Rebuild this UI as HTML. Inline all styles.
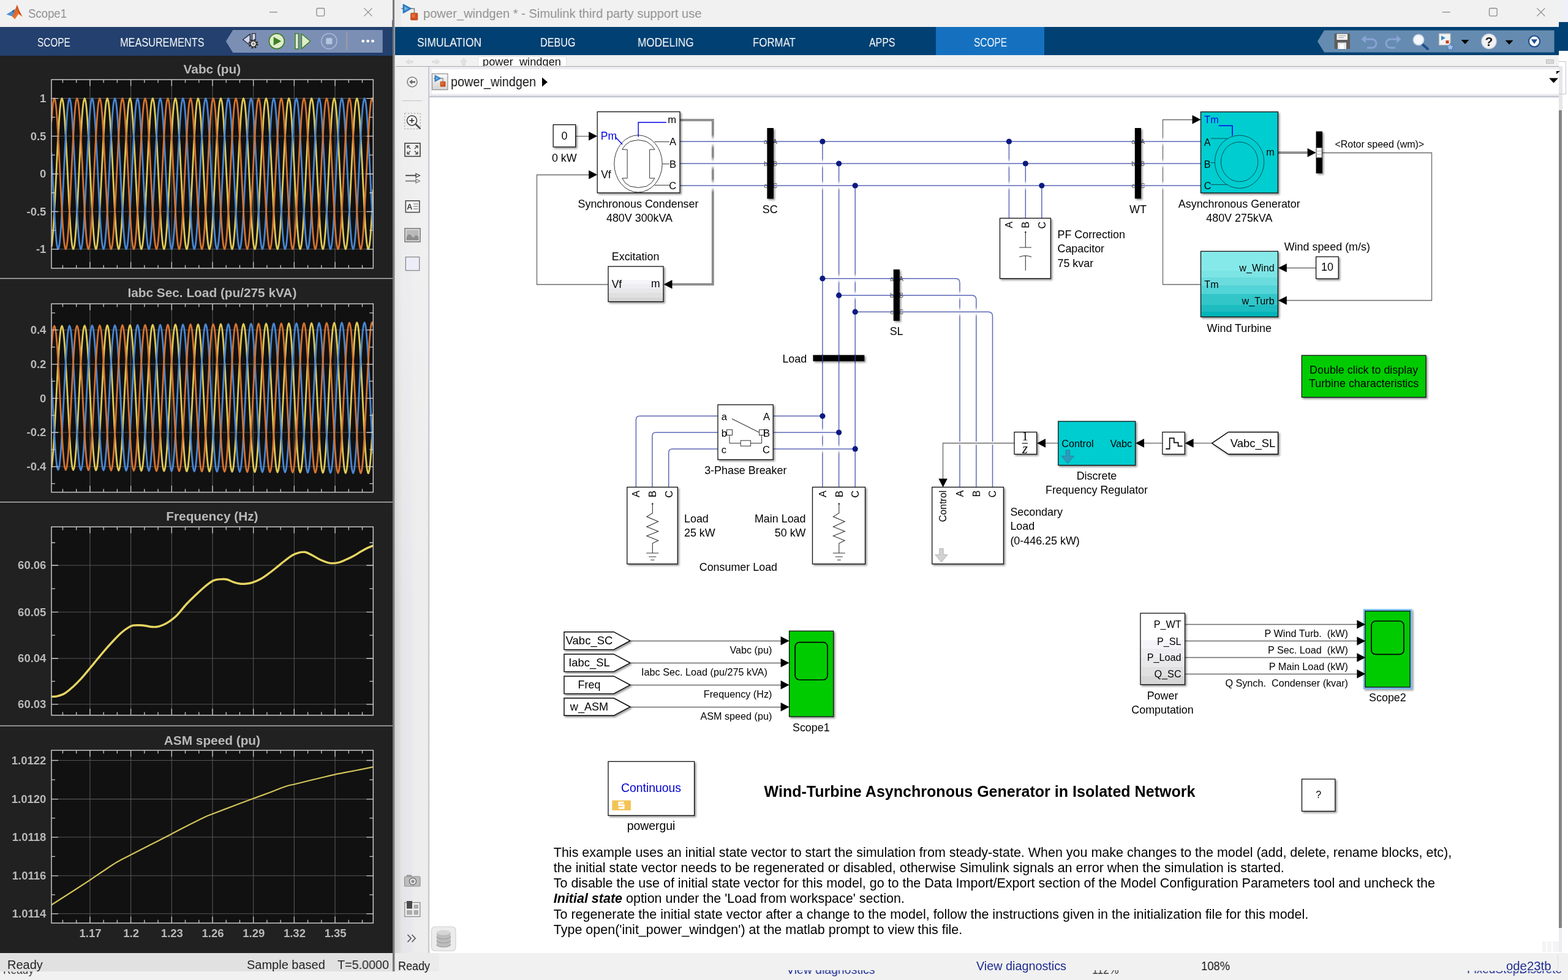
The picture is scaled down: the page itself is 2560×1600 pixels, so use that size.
<!DOCTYPE html>
<html lang="en"><head><meta charset="utf-8"><title>power_windgen - Simulink / Scope1</title>
<style>
html,body{margin:0;padding:0;background:#f1f1f1}
body{width:2560px;height:1600px;overflow:hidden;position:relative;font-family:"Liberation Sans",sans-serif}
.abs{position:absolute;display:block}
svg.abs{will-change:transform}
.t{position:absolute;white-space:nowrap;line-height:1;transform-origin:0 50%;will-change:transform}
</style></head>
<body>
<div class="abs" style="left:0;top:0;width:640.5px;height:44px;background:#f1f1f1"></div>
<div class="abs" style="left:0;top:44px;width:640.5px;height:47px;background:#23406e"></div>
<div class="abs" style="left:0;top:91px;width:640.5px;height:1465px;background:#212121"></div>
<div class="abs" style="left:0;top:1556px;width:640.5px;height:30px;background:#e1e1e1"></div>
<div class="abs" style="left:0;top:1586px;width:645px;height:14px;background:#f1f1f1"></div>
<svg class="abs" style="left:0;top:0" width="641" height="91" viewBox="0 0 641 91"><defs><linearGradient id="mlg" x1="0" y1="0" x2="1" y2="1"><stop offset="0" stop-color="#b83a14"/><stop offset=".55" stop-color="#e8702a"/><stop offset="1" stop-color="#f6b040"/></linearGradient></defs><path d="M10.3 23.6 L18.8 18.6 L22.6 21.4 L19.6 26.6 Z" fill="#4a8fd6"/><path d="M18.8 18.6 L24.5 14.5 L22.6 21.4 Z" fill="#2b5f9e"/><path d="M22.6 21.4 L27.8 7.8 L31.2 17 L36.4 27.3 L30.2 23 L24.3 31.6 L19.6 26.6 Z" fill="url(#mlg)"/><path d="M27.8 7.8 L31.2 17 L36.4 27.3 L30.4 21.5 Z" fill="#c9461a"/><line x1="440" y1="19.8" x2="453" y2="19.8" stroke="#8a8a8a" stroke-width="1.3"/><rect x="517" y="13.5" width="12.6" height="12.6" rx="1.8" fill="none" stroke="#8a8a8a" stroke-width="1.3"/><path d="M594.5 13.4 l13 13 M607.5 13.4 l-13 13" stroke="#8a8a8a" stroke-width="1.3" fill="none"/><path d="M368.8 67.5 L380.3 49 H624.7 V86 H380.3 Z" fill="#7b8fb5"/><path d="M396.6 64.8 L408.3 55.6 V74 Z" fill="#cfd8f2" stroke="#2b2b2b" stroke-width="1.4" stroke-linejoin="round"/><rect x="411.6" y="54.8" width="5.6" height="11" fill="#cfd8f2" stroke="#2b2b2b" stroke-width="1.3"/><circle cx="413.6" cy="71.6" r="6.2" fill="#e9e9e9" stroke="#2b2b2b" stroke-width="3.4" stroke-dasharray="2.6 2.27"/><circle cx="413.6" cy="71.6" r="5" fill="#e4e4e4" stroke="#2b2b2b" stroke-width="1.6"/><circle cx="413.6" cy="71.6" r="2" fill="#8a8a8a"/><circle cx="451.8" cy="67.2" r="12.4" fill="#e0edcc" stroke="#3c8024" stroke-width="1.8"/><path d="M446.6 60.2 L459.2 67.2 L446.6 74.2 Z" fill="#3c8024"/><rect x="482" y="54.8" width="5.4" height="25" fill="#e0edcc" stroke="#3c8024" stroke-width="1.5"/><path d="M492.4 55.2 L506.6 67.3 L492.4 79.6 Z" fill="#e0edcc" stroke="#3c8024" stroke-width="1.5" stroke-linejoin="round"/><circle cx="537.3" cy="67.2" r="12.6" fill="none" stroke="#b9bfe0" stroke-width="1.3"/><rect x="532.2" y="62.1" width="10.2" height="10.2" rx="1.6" fill="#b3c4de"/><line x1="566.4" y1="53" x2="566.4" y2="82" stroke="#ada595" stroke-width="1.3"/><circle cx="592.7" cy="67.1" r="2.4" fill="#fff"/><circle cx="600.6" cy="67.1" r="2.4" fill="#fff"/><circle cx="608.5" cy="67.1" r="2.4" fill="#fff"/></svg>
<span class="t" style="left:45.5px;top:11px;font-size:21px;color:#8e8e8e;transform:scaleX(0.8845);">Scope1</span>
<span class="t" style="left:60.9px;top:60px;font-size:19.6px;color:#fff;transform:scaleX(0.7840);">SCOPE</span>
<span class="t" style="left:195.8px;top:60px;font-size:19.6px;color:#fff;transform:scaleX(0.8306);">MEASUREMENTS</span>
<span class="t" style="left:11.6px;top:1565px;font-size:20px;color:#222;">Ready</span>
<span class="t" style="left:403px;top:1565px;font-size:20px;color:#222;">Sample based</span>
<span class="t" style="left:551.4px;top:1565px;font-size:20px;color:#222;transform:scaleX(0.9874);">T=5.0000</span>
<div class="abs" style="left:0;top:1586px;width:200px;height:12px;overflow:hidden"><span class="t" style="left:5px;top:-12px;font-size:19px;color:#333;transform:scaleX(0.9104);">Ready</span></div>
<div class="abs" style="left:640.4px;top:33px;width:4.6px;height:11px;background:#5a6aa0"></div>
<div class="abs" style="left:640.5px;top:0;width:3px;height:1586px;background:#787878"></div>
<div class="abs" style="left:643.5px;top:0;width:1.5px;height:1586px;background:#bdbdbd"></div>
<div class="abs" style="left:643.5px;top:0;width:1.5px;height:44px;background:#e6e6e6"></div>
<div class="abs" style="left:645px;top:0;width:1915px;height:44px;background:#f1f1f1"></div>
<div class="abs" style="left:645px;top:0;width:10px;height:44px;background:#ebebeb"></div>
<div class="abs" style="left:645px;top:44px;width:1900px;height:46.6px;background:#004073"></div>
<div class="abs" style="left:2545px;top:36px;width:15px;height:47px;background:#004073"></div>
<div class="abs" style="left:2550px;top:0;width:10px;height:36px;background:#eff0f8"></div>
<div class="abs" style="left:1528px;top:44px;width:177px;height:46.6px;background:#1571c0"></div>
<div class="abs" style="left:645px;top:90px;width:1900px;height:18px;background:#f1f1f1"></div>
<div class="abs" style="left:780.5px;top:92.5px;width:143.5px;height:15.5px;background:#fff;box-shadow:0 0 0 1px #e0e0e0"></div>
<div class="abs" style="left:781px;top:92px;width:143px;height:15.5px;overflow:hidden"><span class="t" style="left:7.2px;top:0px;font-size:18px;color:#111;transform:scaleX(1.0151);">power_windgen</span></div>
<div class="abs" style="left:646px;top:108px;width:1899px;height:1px;background:#a9a9a9"></div>
<div class="abs" style="left:646px;top:109px;width:1899px;height:4px;background:#ececf2"></div>
<div class="abs" style="left:645px;top:109px;width:56px;height:1447px;background:linear-gradient(90deg,#d2d2d2 0,#e0e0e0 9px,#e5e5e8 12px,#e7e7ee 26px,#ececec 30px,#ededed 52px,#e4e4ea 56px)"></div>
<div class="abs" style="left:645px;top:109px;width:54px;height:900px;background:linear-gradient(180deg,rgba(241,241,241,.9),rgba(241,241,241,.55) 45%,rgba(241,241,241,0))"></div>
<div class="abs" style="left:699px;top:109px;width:2px;height:1447px;background:#c9c9d2"></div>
<div class="abs" style="left:701px;top:109px;width:1844px;height:50px;background:#eeeef2"></div>
<div class="abs" style="left:705px;top:113px;width:1840px;height:40px;background:#fff"></div>
<div class="abs" style="left:701px;top:156px;width:1844px;height:3px;background:linear-gradient(#d9dbe2,#b7bcc8)"></div>
<div class="abs" style="left:702px;top:159px;width:1843px;height:1397px;background:#fff"></div>
<div class="abs" style="left:2545px;top:83px;width:15px;height:1473px;background:#fff"></div>
<div class="abs" style="left:2545px;top:108px;width:6px;height:72px;background:#e6e6ea"></div>
<div class="abs" style="left:2545px;top:180px;width:5px;height:1335px;background:#858585"></div>
<div class="abs" style="left:2545px;top:100px;width:12px;height:54px;border:1px solid #c4c8d0;border-left:0;box-sizing:border-box"></div>
<div class="abs" style="left:645px;top:1556px;width:1915px;height:44px;background:#f1f1f1"></div>
<div class="abs" style="left:645px;top:1556px;width:72px;height:30px;background:#ebebeb"></div>
<div class="abs" style="left:2518px;top:1537px;width:27px;height:17px;background:linear-gradient(90deg,#f4f4f4 0 6.5px,#fff 6.5px 8px,#f4f4f4 8px 15.5px,#fff 15.5px 17px,#f4f4f4 17px)"></div>
<svg class="abs" style="left:645px;top:0" width="1915" height="160" viewBox="645 0 1915 160"><g transform="translate(656 8) scale(1)"><path d="M-0.8 6.1 H3 M15 6.1 H20.4 V14" fill="none" stroke="#7a7a7a" stroke-width="1.5"/><path d="M2 -1.4 L16 6.1 L2 13.8 Z" fill="#2f7dc4" stroke="#2a6fb4" stroke-width=".8" stroke-linejoin="round"/><path d="M4.4 2.6 L10.6 6.1 L4.4 9.6 Z" fill="#6fb6e8"/><rect x="14.6" y="13.4" width="11.2" height="11.3" rx="1" fill="#d24f1c" stroke="#b4400f" stroke-width="0.8"/><rect x="16" y="14.8" width="6" height="6" fill="#e47a40" opacity=".75"/></g><line x1="2354.8" y1="19.8" x2="2367.8" y2="19.8" stroke="#8a8a8a" stroke-width="1.3"/><rect x="2431.5" y="13.5" width="12.6" height="12.6" rx="1.8" fill="none" stroke="#8a8a8a" stroke-width="1.3"/><path d="M2509.3 13.4 l13 13 M2522.3 13.4 l-13 13" stroke="#8a8a8a" stroke-width="1.3" fill="none"/><path d="M2151 67.5 L2162 49.5 H2537.6 V85.5 H2162 Z" fill="#668bb0"/><rect x="2178.5" y="54.5" width="25.5" height="25.5" rx="1.5" fill="#5f5f5f"/><rect x="2182.5" y="55.5" width="17.5" height="9.5" fill="#f4f4f4"/><path d="M2185 58.5 h12 M2185 61.5 h9" stroke="#999" stroke-width="1.2"/><rect x="2184" y="69.5" width="14" height="10.5" fill="#e6e6e6"/><rect x="2187" y="72" width="7" height="8" fill="#fdfdfd"/><path d="M2224 64 h16 a7 7 0 0 1 0 14 h-8" fill="none" stroke="#88a3d6" stroke-width="3"/><path d="M2230 57.5 L2222.5 64 L2230 70.5 Z" fill="#88a3d6"/><path d="M2286 64 h-16 a7 7 0 0 0 0 14 h8" fill="none" stroke="#88a3d6" stroke-width="3"/><path d="M2280 57.5 L2287.5 64 L2280 70.5 Z" fill="#88a3d6"/><path d="M2322 72 L2331 80" stroke="#1f4e8c" stroke-width="4" stroke-linecap="round"/><circle cx="2316" cy="65" r="8.6" fill="#f5f8fc" stroke="#c9d3e3" stroke-width="1.6"/><rect x="2349.5" y="55" width="18.5" height="18.5" fill="#f3f3f3" stroke="#bdbdbd" stroke-width="1.2"/><path d="M2353 58 L2360 62 L2353 66 Z" fill="#3d8bc9"/><rect x="2360.5" y="66" width="5" height="5" fill="#c8431a"/><path d="M2367.8 70.5 l1.9 4 4.3 .6 -3.1 3 .8 4.3 -3.9 -2.1 -3.9 2.1 .8 -4.3 -3.1 -3 4.3 -.6 Z" fill="#9cc3ef" stroke="#4775b5" stroke-width="1"/><path d="M2385.5 65 h13 l-6.5 7 Z" fill="#000"/><circle cx="2431" cy="67.5" r="12" fill="#f1f1f1" stroke="#ccd3df" stroke-width="1.4"/><text x="2431" y="75" text-anchor="middle" font-size="21" font-weight="bold" fill="#1c1c1c">?</text><path d="M2457.5 65.8 h13 l-6.5 7 Z" fill="#000"/><circle cx="2505" cy="67.5" r="9" fill="#fff" stroke="#1d4f91" stroke-width="2.2"/><path d="M2499.8 64.2 h10.4 l-5.2 7.6 Z" fill="#1d4f91"/><path d="M662 101 l6 -4 v2.5 h6 v3 h-6 v2.5 Z" fill="#e2e2e2" stroke="#d4d4d4" stroke-width=".8"/><path d="M718 101 l-6 -4 v2.5 h-6 v3 h6 v2.5 Z" fill="#e2e2e2" stroke="#d4d4d4" stroke-width=".8"/><path d="M757 95 l5 6 h-2.8 v5.5 h-4.4 v-5.5 h-2.8 Z" fill="#e2e2e2" stroke="#d4d4d4" stroke-width=".8"/><rect x="2524.5" y="97.5" width="12" height="6" fill="#d8d8d8" stroke="#b5b5b5" stroke-width=".8"/><defs><linearGradient id="bcg" x1="0" y1="0" x2="0" y2="1"><stop offset="0" stop-color="#fafafa"/><stop offset="1" stop-color="#d4d4d4"/></linearGradient></defs><rect x="705.5" y="120.5" width="25.5" height="26" fill="url(#bcg)" stroke="#8e8e8e" stroke-width="1.2"/><g transform="translate(708.5 123.5) scale(0.72)"><path d="M-0.8 6.1 H3 M15 6.1 H20.4 V14" fill="none" stroke="#7a7a7a" stroke-width="1.5"/><path d="M2 -1.4 L16 6.1 L2 13.8 Z" fill="#2f7dc4" stroke="#2a6fb4" stroke-width=".8" stroke-linejoin="round"/><path d="M4.4 2.6 L10.6 6.1 L4.4 9.6 Z" fill="#6fb6e8"/><rect x="14.6" y="13.4" width="11.2" height="11.3" rx="1" fill="#d24f1c" stroke="#b4400f" stroke-width="0.8"/><rect x="16" y="14.8" width="6" height="6" fill="#e47a40" opacity=".75"/></g><path d="M885 126.5 L894 134 L885 141.5 Z" fill="#000"/><path d="M2529 127.5 h15 l-7.5 8 Z" fill="#000"/><path d="M2541 116 h6 l-6 5 Z" fill="#111"/></svg>
<span class="t" style="left:691px;top:11px;font-size:21px;color:#8e8e8e;transform:scaleX(0.9590);">power_windgen * - Simulink third party support use</span>
<span class="t" style="left:680.5px;top:60px;font-size:19.6px;color:#fff;transform:scaleX(0.8873);">SIMULATION</span>
<span class="t" style="left:881.5px;top:60px;font-size:19.6px;color:#fff;transform:scaleX(0.8249);">DEBUG</span>
<span class="t" style="left:1040.8px;top:60px;font-size:19.6px;color:#fff;transform:scaleX(0.8781);">MODELING</span>
<span class="t" style="left:1228.6px;top:60px;font-size:19.6px;color:#fff;transform:scaleX(0.8599);">FORMAT</span>
<span class="t" style="left:1418.6px;top:60px;font-size:19.6px;color:#fff;transform:scaleX(0.8108);">APPS</span>
<span class="t" style="left:1589.5px;top:60px;font-size:19.6px;color:#fff;transform:scaleX(0.7869);">SCOPE</span>
<span class="t" style="left:735.5px;top:124px;font-size:21.5px;color:#111;transform:scaleX(0.9229);">power_windgen</span>
<span class="t" style="left:649.6px;top:1568px;font-size:19.6px;color:#111;transform:scaleX(0.9178);">Ready</span>
<span class="t" style="left:1594px;top:1568px;font-size:19.6px;color:#1d2b8f;transform:scaleX(1.0094);">View diagnostics</span>
<span class="t" style="left:1961px;top:1568px;font-size:19.6px;color:#111;transform:scaleX(0.9376);">108%</span>
<span class="t" style="left:2459px;top:1568px;font-size:19.6px;color:#1d2b8f;transform:scaleX(1.0374);">ode23tb</span>
<div class="abs" style="left:1270px;top:1584px;width:180px;height:12px;overflow:hidden"><span class="t" style="left:13.5px;top:-10px;font-size:19.6px;color:#1f2f96;transform:scaleX(0.9922);">View diagnostics</span></div>
<div class="abs" style="left:1770px;top:1584px;width:80px;height:12px;overflow:hidden"><span class="t" style="left:13px;top:-10px;font-size:19.6px;color:#333;transform:scaleX(0.8937);">112%</span></div>
<div class="abs" style="left:2390px;top:1585px;width:170px;height:12px;overflow:hidden"><span class="t" style="left:5px;top:-12px;font-size:19.6px;color:#1f2f96;transform:scaleX(0.9679);">FixedStepDiscrete</span></div>
<div class="abs" style="left:2545px;top:1515px;width:5px;height:40px;background:#ededf1"></div>
<div class="abs" style="left:2542.5px;top:1558px;width:1px;height:28px;background:#dcdce6"></div>
<svg class="abs" style="left:645px;top:109px" width="110" height="1447" viewBox="645 109 110 1447"><circle cx="673" cy="133.8" r="8" fill="#f6f6f6" stroke="#8a8a8a" stroke-width="1.8"/><path d="M668 133.8 l5 -4 v2.6 h5 v2.8 h-5 v2.6 Z" fill="#6a6a6a"/><line x1="656.5" y1="164.5" x2="689" y2="164.5" stroke="#c2c2c2" stroke-width="1"/><rect x="660.8" y="185" width="25.5" height="25.5" fill="none" stroke="#9a9a9a" stroke-width="1" stroke-dasharray="2.5 2.5"/><path d="M679 203 L685.5 209.5" stroke="#4a4a4a" stroke-width="2.6" stroke-linecap="round"/><circle cx="672.5" cy="196.8" r="8" fill="#fdfdfd" stroke="#4a4a4a" stroke-width="1.7"/><path d="M668.5 196.8 h8 M672.5 192.8 v8" stroke="#222" stroke-width="1.6"/><rect x="661" y="233.8" width="25" height="21.5" fill="#f2f2f2" stroke="#4a4a4a" stroke-width="1.7"/><path d="M665 238 l5 5 M665 238 h4 M665 238 v4 M682 238 l-5 5 M682 238 h-4 M682 238 v4 M665 251.5 l5 -5 M665 251.5 h4 M665 251.5 v-4 M682 251.5 l-5 -5 M682 251.5 h-4 M682 251.5 v-4" stroke="#4a4a4a" stroke-width="1.5" fill="none"/><path d="M662 286.5 h18" stroke="#3a3a3a" stroke-width="1.8"/><path d="M679 283.2 L685.5 286.5 L679 289.8 Z" fill="none" stroke="#3a3a3a" stroke-width="1.2"/><path d="M662 295.5 h18" stroke="#777" stroke-width="1.8"/><path d="M679 292.2 L685.5 295.5 L679 298.8 Z" fill="none" stroke="#777" stroke-width="1.2"/><rect x="662.3" y="327.8" width="22.5" height="18.8" fill="#f4f4f4" stroke="#4a4a4a" stroke-width="1.6"/><text x="664.2" y="342" font-size="12.5" font-weight="bold" fill="#3a3a3a">A</text><path d="M675 333 h7.5 M675 337 h7.5 M675 341 h7.5" stroke="#6a6a6a" stroke-width="1.2"/><rect x="661" y="373" width="25" height="21.8" fill="#dedede" stroke="#7a7a7a" stroke-width="1.6"/><rect x="663.5" y="375.5" width="20" height="16.8" fill="#b9b9b9"/><path d="M663.5 388 q4 -9 8 -3 t6 0 q2 -3 6 2 v5.3 h-20 Z" fill="#8d8d8d"/><rect x="662.3" y="419.6" width="22.4" height="22" fill="#ecedf8" stroke="#8a8a8a" stroke-width="1.3"/><rect x="660.5" y="1431" width="25.5" height="16" rx="2" fill="#bdbdbd" stroke="#8f8f8f" stroke-width="1.2"/><rect x="664" y="1428.3" width="8" height="3.5" fill="#9a9a9a"/><circle cx="674" cy="1439" r="5.6" fill="#e8e8e8" stroke="#7a7a7a" stroke-width="1.6"/><circle cx="674" cy="1439" r="2.6" fill="#8c8c8c"/><rect x="660.8" y="1473.5" width="25" height="23" fill="#efefef" stroke="#8a8a8a" stroke-width="1.3"/><rect x="664" y="1471" width="9" height="12.5" fill="#4a4a4a"/><rect x="664" y="1486" width="9" height="7.5" fill="#ababab"/><rect x="675.5" y="1477" width="7.5" height="6.5" fill="#ababab"/><rect x="675.5" y="1486" width="7.5" height="7.5" fill="#ababab"/><path d="M665.5 1526 l5.5 6 -5.5 6 M672.5 1526 l5.5 6 -5.5 6" fill="none" stroke="#5a5a5a" stroke-width="1.8"/><rect x="704.5" y="1513" width="39.5" height="39.5" rx="6" fill="#ececec" stroke="#d0d0d0" stroke-width="1.2"/><path d="M713 1522.5 v20 a11.3 4 0 0 0 22.6 0 v-20" fill="#bdbdbd"/><ellipse cx="724.3" cy="1522.5" rx="11.3" ry="4" fill="#d6d6d6"/><path d="M713 1529 a11.3 4 0 0 0 22.6 0 M713 1535.5 a11.3 4 0 0 0 22.6 0 M713 1542 a11.3 4 0 0 0 22.6 0" fill="none" stroke="#a1a1a1" stroke-width="1.2"/></svg>
<svg class="abs" style="left:0;top:91px" width="641" height="1465" viewBox="0 91 641 1465" font-family="'Liberation Sans',sans-serif"><defs><clipPath id="cp0"><rect x="84" y="130" width="525.3" height="308"/></clipPath><clipPath id="cp1"><rect x="84" y="496" width="525.3" height="307.6"/></clipPath><clipPath id="cp2"><rect x="84" y="860.2" width="525.3" height="307.5"/></clipPath><clipPath id="cp3"><rect x="84" y="1225" width="525.3" height="282"/></clipPath></defs><rect x="0" y="453.9" width="641" height="1.4" fill="#bdbdbd"/><rect x="0" y="819" width="641" height="1.4" fill="#bdbdbd"/><rect x="0" y="1184.3" width="641" height="1.4" fill="#bdbdbd"/><text x="346.4" y="120" font-size="20.8" text-anchor="middle" font-weight="bold" fill="#b9b9b9">Vabc (pu)</text><text x="346.4" y="485" font-size="20.8" text-anchor="middle" font-weight="bold" fill="#b9b9b9">Iabc Sec. Load (pu/275 kVA)</text><text x="346.4" y="850.3" font-size="20.8" text-anchor="middle" font-weight="bold" fill="#b9b9b9">Frequency (Hz)</text><text x="346.4" y="1215.5" font-size="20.8" text-anchor="middle" font-weight="bold" fill="#b9b9b9">ASM speed (pu)</text><rect x="84" y="130" width="525.3" height="308" fill="#111"/><path d="M146.9 130V438M213.59 130V438M280.28 130V438M346.97 130V438M413.66 130V438M480.35 130V438M547.04 130V438M84 160.6H609.3M84 222.3H609.3M84 284H609.3M84 345.5H609.3M84 406.8H609.3" stroke="#555555" stroke-width="1.1" fill="none"/><g clip-path="url(#cp0)" fill="none" stroke-width="2.8" stroke-linejoin="round"><path d="M84 403.32C84.15 402.35 84.36 402.94 84.89 397.52C85.42 392.1 86.43 381.93 87.21 370.82C87.98 359.7 88.75 345.37 89.52 330.85C90.29 316.33 91.07 299.42 91.84 283.7C92.61 267.98 93.38 251.07 94.15 236.55C94.92 222.03 95.7 207.7 96.47 196.58C97.24 185.47 98.01 175.89 98.78 169.88C99.56 163.86 100.33 160.5 101.1 160.5C101.87 160.5 102.64 163.86 103.42 169.88C104.19 175.89 104.96 185.47 105.73 196.58C106.5 207.7 107.28 222.03 108.05 236.55C108.82 251.07 109.59 267.98 110.36 283.7C111.13 299.42 111.91 316.33 112.68 330.85C113.45 345.37 114.22 359.7 114.99 370.82C115.77 381.93 116.54 391.51 117.31 397.52C118.08 403.54 118.85 406.9 119.62 406.9C120.4 406.9 121.17 403.54 121.94 397.52C122.71 391.51 123.48 381.93 124.26 370.82C125.03 359.7 125.8 345.37 126.57 330.85C127.34 316.33 128.12 299.42 128.89 283.7C129.66 267.98 130.43 251.07 131.2 236.55C131.97 222.03 132.75 207.7 133.52 196.58C134.29 185.47 135.06 175.89 135.83 169.88C136.61 163.86 137.38 160.5 138.15 160.5C138.92 160.5 139.69 163.86 140.47 169.88C141.24 175.89 142.01 185.47 142.78 196.58C143.55 207.7 144.32 222.03 145.1 236.55C145.87 251.07 146.64 267.98 147.41 283.7C148.18 299.42 148.96 316.33 149.73 330.85C150.5 345.37 151.27 359.7 152.04 370.82C152.82 381.93 153.59 391.51 154.36 397.52C155.13 403.54 155.9 406.9 156.67 406.9C157.45 406.9 158.22 403.54 158.99 397.52C159.76 391.51 160.53 381.93 161.31 370.82C162.08 359.7 162.85 345.37 163.62 330.85C164.39 316.33 165.17 299.42 165.94 283.7C166.71 267.98 167.48 251.07 168.25 236.55C169.02 222.03 169.8 207.7 170.57 196.58C171.34 185.47 172.11 175.89 172.88 169.88C173.66 163.86 174.43 160.5 175.2 160.5C175.97 160.5 176.74 163.86 177.52 169.88C178.29 175.89 179.06 185.47 179.83 196.58C180.6 207.7 181.38 222.03 182.15 236.55C182.92 251.07 183.69 267.98 184.46 283.7C185.23 299.42 186.01 316.33 186.78 330.85C187.55 345.37 188.32 359.7 189.09 370.82C189.87 381.93 190.64 391.51 191.41 397.52C192.18 403.54 192.95 406.9 193.72 406.9C194.5 406.9 195.27 403.54 196.04 397.52C196.81 391.51 197.58 381.93 198.36 370.82C199.13 359.7 199.9 345.37 200.67 330.85C201.44 316.33 202.22 299.42 202.99 283.7C203.76 267.98 204.53 251.07 205.3 236.55C206.07 222.03 206.85 207.7 207.62 196.58C208.39 185.47 209.16 175.89 209.93 169.88C210.71 163.86 211.48 160.5 212.25 160.5C213.02 160.5 213.79 163.86 214.57 169.88C215.34 175.89 216.11 185.47 216.88 196.58C217.65 207.7 218.42 222.03 219.2 236.55C219.97 251.07 220.74 267.98 221.51 283.7C222.28 299.42 223.06 316.33 223.83 330.85C224.6 345.37 225.37 359.7 226.14 370.82C226.92 381.93 227.69 391.51 228.46 397.52C229.23 403.54 230 406.9 230.77 406.9C231.55 406.9 232.32 403.54 233.09 397.52C233.86 391.51 234.63 381.93 235.41 370.82C236.18 359.7 236.95 345.37 237.72 330.85C238.49 316.33 239.27 299.42 240.04 283.7C240.81 267.98 241.58 251.07 242.35 236.55C243.12 222.03 243.9 207.7 244.67 196.58C245.44 185.47 246.21 175.89 246.98 169.88C247.76 163.86 248.53 160.5 249.3 160.5C250.07 160.5 250.84 163.86 251.62 169.88C252.39 175.89 253.16 185.47 253.93 196.58C254.7 207.7 255.47 222.03 256.25 236.55C257.02 251.07 257.79 267.98 258.56 283.7C259.33 299.42 260.11 316.33 260.88 330.85C261.65 345.37 262.42 359.7 263.19 370.82C263.97 381.93 264.74 391.51 265.51 397.52C266.28 403.54 267.05 406.9 267.82 406.9C268.6 406.9 269.37 403.54 270.14 397.52C270.91 391.51 271.68 381.93 272.46 370.82C273.23 359.7 274 345.37 274.77 330.85C275.54 316.33 276.32 299.42 277.09 283.7C277.86 267.98 278.63 251.07 279.4 236.55C280.18 222.03 280.95 207.7 281.72 196.58C282.49 185.47 283.26 175.89 284.03 169.88C284.81 163.86 285.58 160.5 286.35 160.5C287.12 160.5 287.89 163.86 288.67 169.88C289.44 175.89 290.21 185.47 290.98 196.58C291.75 207.7 292.52 222.03 293.3 236.55C294.07 251.07 294.84 267.98 295.61 283.7C296.38 299.42 297.16 316.33 297.93 330.85C298.7 345.37 299.47 359.7 300.24 370.82C301.02 381.93 301.79 391.51 302.56 397.52C303.33 403.54 304.1 406.9 304.88 406.9C305.65 406.9 306.42 403.54 307.19 397.52C307.96 391.51 308.73 381.93 309.51 370.82C310.28 359.7 311.05 345.37 311.82 330.85C312.59 316.33 313.37 299.42 314.14 283.7C314.91 267.98 315.68 251.07 316.45 236.55C317.23 222.03 318 207.7 318.77 196.58C319.54 185.47 320.31 175.89 321.08 169.88C321.86 163.86 322.63 160.5 323.4 160.5C324.17 160.5 324.94 163.86 325.72 169.88C326.49 175.89 327.26 185.47 328.03 196.58C328.8 207.7 329.57 222.03 330.35 236.55C331.12 251.07 331.89 267.98 332.66 283.7C333.43 299.42 334.21 316.33 334.98 330.85C335.75 345.37 336.52 359.7 337.29 370.82C338.07 381.93 338.84 391.51 339.61 397.52C340.38 403.54 341.15 406.9 341.92 406.9C342.7 406.9 343.47 403.54 344.24 397.52C345.01 391.51 345.78 381.93 346.56 370.82C347.33 359.7 348.1 345.37 348.87 330.85C349.64 316.33 350.42 299.42 351.19 283.7C351.96 267.98 352.73 251.07 353.5 236.55C354.27 222.03 355.05 207.7 355.82 196.58C356.59 185.47 357.36 175.89 358.13 169.88C358.91 163.86 359.68 160.5 360.45 160.5C361.22 160.5 361.99 163.86 362.77 169.88C363.54 175.89 364.31 185.47 365.08 196.58C365.85 207.7 366.62 222.03 367.4 236.55C368.17 251.07 368.94 267.98 369.71 283.7C370.48 299.42 371.26 316.33 372.03 330.85C372.8 345.37 373.57 359.7 374.34 370.82C375.12 381.93 375.89 391.51 376.66 397.52C377.43 403.54 378.2 406.9 378.98 406.9C379.75 406.9 380.52 403.54 381.29 397.52C382.06 391.51 382.83 381.93 383.61 370.82C384.38 359.7 385.15 345.37 385.92 330.85C386.69 316.33 387.47 299.42 388.24 283.7C389.01 267.98 389.78 251.07 390.55 236.55C391.33 222.03 392.1 207.7 392.87 196.58C393.64 185.47 394.41 175.89 395.18 169.88C395.96 163.86 396.73 160.5 397.5 160.5C398.27 160.5 399.04 163.86 399.82 169.88C400.59 175.89 401.36 185.47 402.13 196.58C402.9 207.7 403.68 222.03 404.45 236.55C405.22 251.07 405.99 267.98 406.76 283.7C407.53 299.42 408.31 316.33 409.08 330.85C409.85 345.37 410.62 359.7 411.39 370.82C412.17 381.93 412.94 391.51 413.71 397.52C414.48 403.54 415.25 406.9 416.02 406.9C416.8 406.9 417.57 403.54 418.34 397.52C419.11 391.51 419.88 381.93 420.66 370.82C421.43 359.7 422.2 345.37 422.97 330.85C423.74 316.33 424.52 299.42 425.29 283.7C426.06 267.98 426.83 251.07 427.6 236.55C428.37 222.03 429.15 207.7 429.92 196.58C430.69 185.47 431.46 175.89 432.23 169.88C433.01 163.86 433.78 160.5 434.55 160.5C435.32 160.5 436.09 163.86 436.87 169.88C437.64 175.89 438.41 185.47 439.18 196.58C439.95 207.7 440.72 222.03 441.5 236.55C442.27 251.07 443.04 267.98 443.81 283.7C444.58 299.42 445.36 316.33 446.13 330.85C446.9 345.37 447.67 359.7 448.44 370.82C449.22 381.93 449.99 391.51 450.76 397.52C451.53 403.54 452.3 406.9 453.07 406.9C453.85 406.9 454.62 403.54 455.39 397.52C456.16 391.51 456.93 381.93 457.71 370.82C458.48 359.7 459.25 345.37 460.02 330.85C460.79 316.33 461.57 299.42 462.34 283.7C463.11 267.98 463.88 251.07 464.65 236.55C465.42 222.03 466.2 207.7 466.97 196.58C467.74 185.47 468.51 175.89 469.28 169.88C470.06 163.86 470.83 160.5 471.6 160.5C472.37 160.5 473.14 163.86 473.92 169.88C474.69 175.89 475.46 185.47 476.23 196.58C477 207.7 477.77 222.03 478.55 236.55C479.32 251.07 480.09 267.98 480.86 283.7C481.63 299.42 482.41 316.33 483.18 330.85C483.95 345.37 484.72 359.7 485.49 370.82C486.27 381.93 487.04 391.51 487.81 397.52C488.58 403.54 489.35 406.9 490.12 406.9C490.9 406.9 491.67 403.54 492.44 397.52C493.21 391.51 493.98 381.93 494.76 370.82C495.53 359.7 496.3 345.37 497.07 330.85C497.84 316.33 498.62 299.42 499.39 283.7C500.16 267.98 500.93 251.07 501.7 236.55C502.48 222.03 503.25 207.7 504.02 196.58C504.79 185.47 505.56 175.89 506.33 169.88C507.11 163.86 507.88 160.5 508.65 160.5C509.42 160.5 510.19 163.86 510.97 169.88C511.74 175.89 512.51 185.47 513.28 196.58C514.05 207.7 514.82 222.03 515.6 236.55C516.37 251.07 517.14 267.98 517.91 283.7C518.68 299.42 519.46 316.33 520.23 330.85C521 345.37 521.77 359.7 522.54 370.82C523.32 381.93 524.09 391.51 524.86 397.52C525.63 403.54 526.4 406.9 527.17 406.9C527.95 406.9 528.72 403.54 529.49 397.52C530.26 391.51 531.03 381.93 531.81 370.82C532.58 359.7 533.35 345.37 534.12 330.85C534.89 316.33 535.67 299.42 536.44 283.7C537.21 267.98 537.98 251.07 538.75 236.55C539.52 222.03 540.3 207.7 541.07 196.58C541.84 185.47 542.61 175.89 543.38 169.88C544.16 163.86 544.93 160.5 545.7 160.5C546.47 160.5 547.24 163.86 548.02 169.88C548.79 175.89 549.56 185.47 550.33 196.58C551.1 207.7 551.87 222.03 552.65 236.55C553.42 251.07 554.19 267.98 554.96 283.7C555.73 299.42 556.51 316.33 557.28 330.85C558.05 345.37 558.82 359.7 559.59 370.82C560.37 381.93 561.14 391.51 561.91 397.52C562.68 403.54 563.45 406.9 564.22 406.9C565 406.9 565.77 403.54 566.54 397.52C567.31 391.51 568.08 381.93 568.86 370.82C569.63 359.7 570.4 345.37 571.17 330.85C571.94 316.33 572.72 299.42 573.49 283.7C574.26 267.98 575.03 251.07 575.8 236.55C576.57 222.03 577.35 207.7 578.12 196.58C578.89 185.47 579.66 175.89 580.43 169.88C581.21 163.86 581.98 160.5 582.75 160.5C583.52 160.5 584.29 163.86 585.07 169.88C585.84 175.89 586.61 185.47 587.38 196.58C588.15 207.7 588.92 222.03 589.7 236.55C590.47 251.07 591.24 267.98 592.01 283.7C592.78 299.42 593.56 316.33 594.33 330.85C595.1 345.37 595.87 359.7 596.64 370.82C597.42 381.93 598.19 391.51 598.96 397.52C599.73 403.54 600.5 406.9 601.27 406.9C602.05 406.9 602.82 403.54 603.59 397.52C604.36 391.51 605.13 381.93 605.91 370.82C606.68 359.7 607.66 341.09 608.22 330.85C608.79 320.6 609.12 312.95 609.3 309.37" stroke="#dfc955"/><path d="M84 249.42C84.28 255.14 85 270.13 85.66 283.7C86.33 297.27 87.21 316.33 87.98 330.85C88.75 345.37 89.52 359.7 90.29 370.82C91.07 381.93 91.84 391.51 92.61 397.52C93.38 403.54 94.15 406.9 94.92 406.9C95.7 406.9 96.47 403.54 97.24 397.52C98.01 391.51 98.78 381.93 99.56 370.82C100.33 359.7 101.1 345.37 101.87 330.85C102.64 316.33 103.42 299.42 104.19 283.7C104.96 267.98 105.73 251.07 106.5 236.55C107.27 222.03 108.05 207.7 108.82 196.58C109.59 185.47 110.36 175.89 111.13 169.88C111.91 163.86 112.68 160.5 113.45 160.5C114.22 160.5 114.99 163.86 115.77 169.88C116.54 175.89 117.31 185.47 118.08 196.58C118.85 207.7 119.62 222.03 120.4 236.55C121.17 251.07 121.94 267.98 122.71 283.7C123.48 299.42 124.26 316.33 125.03 330.85C125.8 345.37 126.57 359.7 127.34 370.82C128.12 381.93 128.89 391.51 129.66 397.52C130.43 403.54 131.2 406.9 131.97 406.9C132.75 406.9 133.52 403.54 134.29 397.52C135.06 391.51 135.83 381.93 136.61 370.82C137.38 359.7 138.15 345.37 138.92 330.85C139.69 316.33 140.47 299.42 141.24 283.7C142.01 267.98 142.78 251.07 143.55 236.55C144.32 222.03 145.1 207.7 145.87 196.58C146.64 185.47 147.41 175.89 148.18 169.88C148.96 163.86 149.73 160.5 150.5 160.5C151.27 160.5 152.04 163.86 152.82 169.88C153.59 175.89 154.36 185.47 155.13 196.58C155.9 207.7 156.67 222.03 157.45 236.55C158.22 251.07 158.99 267.98 159.76 283.7C160.53 299.42 161.31 316.33 162.08 330.85C162.85 345.37 163.62 359.7 164.39 370.82C165.17 381.93 165.94 391.51 166.71 397.52C167.48 403.54 168.25 406.9 169.02 406.9C169.8 406.9 170.57 403.54 171.34 397.52C172.11 391.51 172.88 381.93 173.66 370.82C174.43 359.7 175.2 345.37 175.97 330.85C176.74 316.33 177.52 299.42 178.29 283.7C179.06 267.98 179.83 251.07 180.6 236.55C181.37 222.03 182.15 207.7 182.92 196.58C183.69 185.47 184.46 175.89 185.23 169.88C186.01 163.86 186.78 160.5 187.55 160.5C188.32 160.5 189.09 163.86 189.87 169.88C190.64 175.89 191.41 185.47 192.18 196.58C192.95 207.7 193.72 222.03 194.5 236.55C195.27 251.07 196.04 267.98 196.81 283.7C197.58 299.42 198.36 316.33 199.13 330.85C199.9 345.37 200.67 359.7 201.44 370.82C202.22 381.93 202.99 391.51 203.76 397.52C204.53 403.54 205.3 406.9 206.07 406.9C206.85 406.9 207.62 403.54 208.39 397.52C209.16 391.51 209.93 381.93 210.71 370.82C211.48 359.7 212.25 345.37 213.02 330.85C213.79 316.33 214.57 299.42 215.34 283.7C216.11 267.98 216.88 251.07 217.65 236.55C218.42 222.03 219.2 207.7 219.97 196.58C220.74 185.47 221.51 175.89 222.28 169.88C223.06 163.86 223.83 160.5 224.6 160.5C225.37 160.5 226.14 163.86 226.92 169.88C227.69 175.89 228.46 185.47 229.23 196.58C230 207.7 230.78 222.03 231.55 236.55C232.32 251.07 233.09 267.98 233.86 283.7C234.63 299.42 235.41 316.33 236.18 330.85C236.95 345.37 237.72 359.7 238.49 370.82C239.27 381.93 240.04 391.51 240.81 397.52C241.58 403.54 242.35 406.9 243.12 406.9C243.9 406.9 244.67 403.54 245.44 397.52C246.21 391.51 246.98 381.93 247.76 370.82C248.53 359.7 249.3 345.37 250.07 330.85C250.84 316.33 251.62 299.42 252.39 283.7C253.16 267.98 253.93 251.07 254.7 236.55C255.47 222.03 256.25 207.7 257.02 196.58C257.79 185.47 258.56 175.89 259.33 169.88C260.11 163.86 260.88 160.5 261.65 160.5C262.42 160.5 263.19 163.86 263.97 169.88C264.74 175.89 265.51 185.47 266.28 196.58C267.05 207.7 267.82 222.03 268.6 236.55C269.37 251.07 270.14 267.98 270.91 283.7C271.68 299.42 272.46 316.33 273.23 330.85C274 345.37 274.77 359.7 275.54 370.82C276.32 381.93 277.09 391.51 277.86 397.52C278.63 403.54 279.4 406.9 280.17 406.9C280.95 406.9 281.72 403.54 282.49 397.52C283.26 391.51 284.03 381.93 284.81 370.82C285.58 359.7 286.35 345.37 287.12 330.85C287.89 316.33 288.67 299.42 289.44 283.7C290.21 267.98 290.98 251.07 291.75 236.55C292.52 222.03 293.3 207.7 294.07 196.58C294.84 185.47 295.61 175.89 296.38 169.88C297.16 163.86 297.93 160.5 298.7 160.5C299.47 160.5 300.24 163.86 301.02 169.88C301.79 175.89 302.56 185.47 303.33 196.58C304.1 207.7 304.87 222.03 305.65 236.55C306.42 251.07 307.19 267.98 307.96 283.7C308.73 299.42 309.51 316.33 310.28 330.85C311.05 345.37 311.82 359.7 312.59 370.82C313.37 381.93 314.14 391.51 314.91 397.52C315.68 403.54 316.45 406.9 317.22 406.9C318 406.9 318.77 403.54 319.54 397.52C320.31 391.51 321.08 381.93 321.86 370.82C322.63 359.7 323.4 345.37 324.17 330.85C324.94 316.33 325.72 299.42 326.49 283.7C327.26 267.98 328.03 251.07 328.8 236.55C329.57 222.03 330.35 207.7 331.12 196.58C331.89 185.47 332.66 175.89 333.43 169.88C334.21 163.86 334.98 160.5 335.75 160.5C336.52 160.5 337.29 163.86 338.07 169.88C338.84 175.89 339.61 185.47 340.38 196.58C341.15 207.7 341.92 222.03 342.7 236.55C343.47 251.07 344.24 267.98 345.01 283.7C345.78 299.42 346.56 316.33 347.33 330.85C348.1 345.37 348.87 359.7 349.64 370.82C350.42 381.93 351.19 391.51 351.96 397.52C352.73 403.54 353.5 406.9 354.27 406.9C355.05 406.9 355.82 403.54 356.59 397.52C357.36 391.51 358.13 381.93 358.91 370.82C359.68 359.7 360.45 345.37 361.22 330.85C361.99 316.33 362.77 299.42 363.54 283.7C364.31 267.98 365.08 251.07 365.85 236.55C366.62 222.03 367.4 207.7 368.17 196.58C368.94 185.47 369.71 175.89 370.48 169.88C371.26 163.86 372.03 160.5 372.8 160.5C373.57 160.5 374.34 163.86 375.12 169.88C375.89 175.89 376.66 185.47 377.43 196.58C378.2 207.7 378.98 222.03 379.75 236.55C380.52 251.07 381.29 267.98 382.06 283.7C382.83 299.42 383.61 316.33 384.38 330.85C385.15 345.37 385.92 359.7 386.69 370.82C387.47 381.93 388.24 391.51 389.01 397.52C389.78 403.54 390.55 406.9 391.32 406.9C392.1 406.9 392.87 403.54 393.64 397.52C394.41 391.51 395.18 381.93 395.96 370.82C396.73 359.7 397.5 345.37 398.27 330.85C399.04 316.33 399.82 299.42 400.59 283.7C401.36 267.98 402.13 251.07 402.9 236.55C403.67 222.03 404.45 207.7 405.22 196.58C405.99 185.47 406.76 175.89 407.53 169.88C408.31 163.86 409.08 160.5 409.85 160.5C410.62 160.5 411.39 163.86 412.17 169.88C412.94 175.89 413.71 185.47 414.48 196.58C415.25 207.7 416.02 222.03 416.8 236.55C417.57 251.07 418.34 267.98 419.11 283.7C419.88 299.42 420.66 316.33 421.43 330.85C422.2 345.37 422.97 359.7 423.74 370.82C424.52 381.93 425.29 391.51 426.06 397.52C426.83 403.54 427.6 406.9 428.37 406.9C429.15 406.9 429.92 403.54 430.69 397.52C431.46 391.51 432.23 381.93 433.01 370.82C433.78 359.7 434.55 345.37 435.32 330.85C436.09 316.33 436.87 299.42 437.64 283.7C438.41 267.98 439.18 251.07 439.95 236.55C440.72 222.03 441.5 207.7 442.27 196.58C443.04 185.47 443.81 175.89 444.58 169.88C445.36 163.86 446.13 160.5 446.9 160.5C447.67 160.5 448.44 163.86 449.22 169.88C449.99 175.89 450.76 185.47 451.53 196.58C452.3 207.7 453.07 222.03 453.85 236.55C454.62 251.07 455.39 267.98 456.16 283.7C456.93 299.42 457.71 316.33 458.48 330.85C459.25 345.37 460.02 359.7 460.79 370.82C461.57 381.93 462.34 391.51 463.11 397.52C463.88 403.54 464.65 406.9 465.42 406.9C466.2 406.9 466.97 403.54 467.74 397.52C468.51 391.51 469.28 381.93 470.06 370.82C470.83 359.7 471.6 345.37 472.37 330.85C473.14 316.33 473.92 299.42 474.69 283.7C475.46 267.98 476.23 251.07 477 236.55C477.77 222.03 478.55 207.7 479.32 196.58C480.09 185.47 480.86 175.89 481.63 169.88C482.41 163.86 483.18 160.5 483.95 160.5C484.72 160.5 485.49 163.86 486.27 169.88C487.04 175.89 487.81 185.47 488.58 196.58C489.35 207.7 490.12 222.03 490.9 236.55C491.67 251.07 492.44 267.98 493.21 283.7C493.98 299.42 494.76 316.33 495.53 330.85C496.3 345.37 497.07 359.7 497.84 370.82C498.62 381.93 499.39 391.51 500.16 397.52C500.93 403.54 501.7 406.9 502.47 406.9C503.25 406.9 504.02 403.54 504.79 397.52C505.56 391.51 506.33 381.93 507.11 370.82C507.88 359.7 508.65 345.37 509.42 330.85C510.19 316.33 510.97 299.42 511.74 283.7C512.51 267.98 513.28 251.07 514.05 236.55C514.82 222.03 515.6 207.7 516.37 196.58C517.14 185.47 517.91 175.89 518.68 169.88C519.46 163.86 520.23 160.5 521 160.5C521.77 160.5 522.54 163.86 523.32 169.88C524.09 175.89 524.86 185.47 525.63 196.58C526.4 207.7 527.17 222.03 527.95 236.55C528.72 251.07 529.49 267.98 530.26 283.7C531.03 299.42 531.81 316.33 532.58 330.85C533.35 345.37 534.12 359.7 534.89 370.82C535.67 381.93 536.44 391.51 537.21 397.52C537.98 403.54 538.75 406.9 539.52 406.9C540.3 406.9 541.07 403.54 541.84 397.52C542.61 391.51 543.38 381.93 544.16 370.82C544.93 359.7 545.7 345.37 546.47 330.85C547.24 316.33 548.02 299.42 548.79 283.7C549.56 267.98 550.33 251.07 551.1 236.55C551.88 222.03 552.65 207.7 553.42 196.58C554.19 185.47 554.96 175.89 555.73 169.88C556.51 163.86 557.28 160.5 558.05 160.5C558.82 160.5 559.59 163.86 560.37 169.88C561.14 175.89 561.91 185.47 562.68 196.58C563.45 207.7 564.22 222.03 565 236.55C565.77 251.07 566.54 267.98 567.31 283.7C568.08 299.42 568.86 316.33 569.63 330.85C570.4 345.37 571.17 359.7 571.94 370.82C572.72 381.93 573.49 391.51 574.26 397.52C575.03 403.54 575.8 406.9 576.57 406.9C577.35 406.9 578.12 403.54 578.89 397.52C579.66 391.51 580.43 381.93 581.21 370.82C581.98 359.7 582.75 345.37 583.52 330.85C584.29 316.33 585.07 299.42 585.84 283.7C586.61 267.98 587.38 251.07 588.15 236.55C588.92 222.03 589.7 207.7 590.47 196.58C591.24 185.47 592.01 175.89 592.78 169.88C593.56 163.86 594.33 160.5 595.1 160.5C595.87 160.5 596.64 163.86 597.42 169.88C598.19 175.89 598.96 185.47 599.73 196.58C600.5 207.7 601.27 222.03 602.05 236.55C602.82 251.07 603.59 267.98 604.36 283.7C605.13 299.42 605.91 316.33 606.68 330.85C607.45 345.37 608.56 363.42 608.99 370.82C609.43 378.21 609.25 374.49 609.3 375.22" stroke="#4986d2"/><path d="M84 198.36C84.02 198.06 83.71 201.33 84.12 196.58C84.52 191.84 85.66 175.89 86.43 169.88C87.21 163.86 87.98 160.5 88.75 160.5C89.52 160.5 90.29 163.86 91.07 169.88C91.84 175.89 92.61 185.47 93.38 196.58C94.15 207.7 94.93 222.03 95.7 236.55C96.47 251.07 97.24 267.98 98.01 283.7C98.78 299.42 99.56 316.33 100.33 330.85C101.1 345.37 101.87 359.7 102.64 370.82C103.42 381.93 104.19 391.51 104.96 397.52C105.73 403.54 106.5 406.9 107.28 406.9C108.05 406.9 108.82 403.54 109.59 397.52C110.36 391.51 111.13 381.93 111.91 370.82C112.68 359.7 113.45 345.37 114.22 330.85C114.99 316.33 115.77 299.42 116.54 283.7C117.31 267.98 118.08 251.07 118.85 236.55C119.62 222.03 120.4 207.7 121.17 196.58C121.94 185.47 122.71 175.89 123.48 169.88C124.26 163.86 125.03 160.5 125.8 160.5C126.57 160.5 127.34 163.86 128.12 169.88C128.89 175.89 129.66 185.47 130.43 196.58C131.2 207.7 131.97 222.03 132.75 236.55C133.52 251.07 134.29 267.98 135.06 283.7C135.83 299.42 136.61 316.33 137.38 330.85C138.15 345.37 138.92 359.7 139.69 370.82C140.47 381.93 141.24 391.51 142.01 397.52C142.78 403.54 143.55 406.9 144.32 406.9C145.1 406.9 145.87 403.54 146.64 397.52C147.41 391.51 148.18 381.93 148.96 370.82C149.73 359.7 150.5 345.37 151.27 330.85C152.04 316.33 152.82 299.42 153.59 283.7C154.36 267.98 155.13 251.07 155.9 236.55C156.67 222.03 157.45 207.7 158.22 196.58C158.99 185.47 159.76 175.89 160.53 169.88C161.31 163.86 162.08 160.5 162.85 160.5C163.62 160.5 164.39 163.86 165.17 169.88C165.94 175.89 166.71 185.47 167.48 196.58C168.25 207.7 169.03 222.03 169.8 236.55C170.57 251.07 171.34 267.98 172.11 283.7C172.88 299.42 173.66 316.33 174.43 330.85C175.2 345.37 175.97 359.7 176.74 370.82C177.52 381.93 178.29 391.51 179.06 397.52C179.83 403.54 180.6 406.9 181.38 406.9C182.15 406.9 182.92 403.54 183.69 397.52C184.46 391.51 185.23 381.93 186.01 370.82C186.78 359.7 187.55 345.37 188.32 330.85C189.09 316.33 189.87 299.42 190.64 283.7C191.41 267.98 192.18 251.07 192.95 236.55C193.72 222.03 194.5 207.7 195.27 196.58C196.04 185.47 196.81 175.89 197.58 169.88C198.36 163.86 199.13 160.5 199.9 160.5C200.67 160.5 201.44 163.86 202.22 169.88C202.99 175.89 203.76 185.47 204.53 196.58C205.3 207.7 206.08 222.03 206.85 236.55C207.62 251.07 208.39 267.98 209.16 283.7C209.93 299.42 210.71 316.33 211.48 330.85C212.25 345.37 213.02 359.7 213.79 370.82C214.57 381.93 215.34 391.51 216.11 397.52C216.88 403.54 217.65 406.9 218.43 406.9C219.2 406.9 219.97 403.54 220.74 397.52C221.51 391.51 222.28 381.93 223.06 370.82C223.83 359.7 224.6 345.37 225.37 330.85C226.14 316.33 226.92 299.42 227.69 283.7C228.46 267.98 229.23 251.07 230 236.55C230.77 222.03 231.55 207.7 232.32 196.58C233.09 185.47 233.86 175.89 234.63 169.88C235.41 163.86 236.18 160.5 236.95 160.5C237.72 160.5 238.49 163.86 239.27 169.88C240.04 175.89 240.81 185.47 241.58 196.58C242.35 207.7 243.12 222.03 243.9 236.55C244.67 251.07 245.44 267.98 246.21 283.7C246.98 299.42 247.76 316.33 248.53 330.85C249.3 345.37 250.07 359.7 250.84 370.82C251.62 381.93 252.39 391.51 253.16 397.52C253.93 403.54 254.7 406.9 255.47 406.9C256.25 406.9 257.02 403.54 257.79 397.52C258.56 391.51 259.33 381.93 260.11 370.82C260.88 359.7 261.65 345.37 262.42 330.85C263.19 316.33 263.97 299.42 264.74 283.7C265.51 267.98 266.28 251.07 267.05 236.55C267.82 222.03 268.6 207.7 269.37 196.58C270.14 185.47 270.91 175.89 271.68 169.88C272.46 163.86 273.23 160.5 274 160.5C274.77 160.5 275.54 163.86 276.32 169.88C277.09 175.89 277.86 185.47 278.63 196.58C279.4 207.7 280.17 222.03 280.95 236.55C281.72 251.07 282.49 267.98 283.26 283.7C284.03 299.42 284.81 316.33 285.58 330.85C286.35 345.37 287.12 359.7 287.89 370.82C288.67 381.93 289.44 391.51 290.21 397.52C290.98 403.54 291.75 406.9 292.52 406.9C293.3 406.9 294.07 403.54 294.84 397.52C295.61 391.51 296.38 381.93 297.16 370.82C297.93 359.7 298.7 345.37 299.47 330.85C300.24 316.33 301.02 299.42 301.79 283.7C302.56 267.98 303.33 251.07 304.1 236.55C304.88 222.03 305.65 207.7 306.42 196.58C307.19 185.47 307.96 175.89 308.73 169.88C309.51 163.86 310.28 160.5 311.05 160.5C311.82 160.5 312.59 163.86 313.37 169.88C314.14 175.89 314.91 185.47 315.68 196.58C316.45 207.7 317.22 222.03 318 236.55C318.77 251.07 319.54 267.98 320.31 283.7C321.08 299.42 321.86 316.33 322.63 330.85C323.4 345.37 324.17 359.7 324.94 370.82C325.72 381.93 326.49 391.51 327.26 397.52C328.03 403.54 328.8 406.9 329.57 406.9C330.35 406.9 331.12 403.54 331.89 397.52C332.66 391.51 333.43 381.93 334.21 370.82C334.98 359.7 335.75 345.37 336.52 330.85C337.29 316.33 338.07 299.42 338.84 283.7C339.61 267.98 340.38 251.07 341.15 236.55C341.93 222.03 342.7 207.7 343.47 196.58C344.24 185.47 345.01 175.89 345.78 169.88C346.56 163.86 347.33 160.5 348.1 160.5C348.87 160.5 349.64 163.86 350.42 169.88C351.19 175.89 351.96 185.47 352.73 196.58C353.5 207.7 354.27 222.03 355.05 236.55C355.82 251.07 356.59 267.98 357.36 283.7C358.13 299.42 358.91 316.33 359.68 330.85C360.45 345.37 361.22 359.7 361.99 370.82C362.77 381.93 363.54 391.51 364.31 397.52C365.08 403.54 365.85 406.9 366.62 406.9C367.4 406.9 368.17 403.54 368.94 397.52C369.71 391.51 370.48 381.93 371.26 370.82C372.03 359.7 372.8 345.37 373.57 330.85C374.34 316.33 375.12 299.42 375.89 283.7C376.66 267.98 377.43 251.07 378.2 236.55C378.98 222.03 379.75 207.7 380.52 196.58C381.29 185.47 382.06 175.89 382.83 169.88C383.61 163.86 384.38 160.5 385.15 160.5C385.92 160.5 386.69 163.86 387.47 169.88C388.24 175.89 389.01 185.47 389.78 196.58C390.55 207.7 391.33 222.03 392.1 236.55C392.87 251.07 393.64 267.98 394.41 283.7C395.18 299.42 395.96 316.33 396.73 330.85C397.5 345.37 398.27 359.7 399.04 370.82C399.82 381.93 400.59 391.51 401.36 397.52C402.13 403.54 402.9 406.9 403.68 406.9C404.45 406.9 405.22 403.54 405.99 397.52C406.76 391.51 407.53 381.93 408.31 370.82C409.08 359.7 409.85 345.37 410.62 330.85C411.39 316.33 412.17 299.42 412.94 283.7C413.71 267.98 414.48 251.07 415.25 236.55C416.02 222.03 416.8 207.7 417.57 196.58C418.34 185.47 419.11 175.89 419.88 169.88C420.66 163.86 421.43 160.5 422.2 160.5C422.97 160.5 423.74 163.86 424.52 169.88C425.29 175.89 426.06 185.47 426.83 196.58C427.6 207.7 428.38 222.03 429.15 236.55C429.92 251.07 430.69 267.98 431.46 283.7C432.23 299.42 433.01 316.33 433.78 330.85C434.55 345.37 435.32 359.7 436.09 370.82C436.87 381.93 437.64 391.51 438.41 397.52C439.18 403.54 439.95 406.9 440.72 406.9C441.5 406.9 442.27 403.54 443.04 397.52C443.81 391.51 444.58 381.93 445.36 370.82C446.13 359.7 446.9 345.37 447.67 330.85C448.44 316.33 449.22 299.42 449.99 283.7C450.76 267.98 451.53 251.07 452.3 236.55C453.07 222.03 453.85 207.7 454.62 196.58C455.39 185.47 456.16 175.89 456.93 169.88C457.71 163.86 458.48 160.5 459.25 160.5C460.02 160.5 460.79 163.86 461.57 169.88C462.34 175.89 463.11 185.47 463.88 196.58C464.65 207.7 465.42 222.03 466.2 236.55C466.97 251.07 467.74 267.98 468.51 283.7C469.28 299.42 470.06 316.33 470.83 330.85C471.6 345.37 472.37 359.7 473.14 370.82C473.92 381.93 474.69 391.51 475.46 397.52C476.23 403.54 477 406.9 477.77 406.9C478.55 406.9 479.32 403.54 480.09 397.52C480.86 391.51 481.63 381.93 482.41 370.82C483.18 359.7 483.95 345.37 484.72 330.85C485.49 316.33 486.27 299.42 487.04 283.7C487.81 267.98 488.58 251.07 489.35 236.55C490.12 222.03 490.9 207.7 491.67 196.58C492.44 185.47 493.21 175.89 493.98 169.88C494.76 163.86 495.53 160.5 496.3 160.5C497.07 160.5 497.84 163.86 498.62 169.88C499.39 175.89 500.16 185.47 500.93 196.58C501.7 207.7 502.47 222.03 503.25 236.55C504.02 251.07 504.79 267.98 505.56 283.7C506.33 299.42 507.11 316.33 507.88 330.85C508.65 345.37 509.42 359.7 510.19 370.82C510.97 381.93 511.74 391.51 512.51 397.52C513.28 403.54 514.05 406.9 514.82 406.9C515.6 406.9 516.37 403.54 517.14 397.52C517.91 391.51 518.68 381.93 519.46 370.82C520.23 359.7 521 345.37 521.77 330.85C522.54 316.33 523.32 299.42 524.09 283.7C524.86 267.98 525.63 251.07 526.4 236.55C527.17 222.03 527.95 207.7 528.72 196.58C529.49 185.47 530.26 175.89 531.03 169.88C531.81 163.86 532.58 160.5 533.35 160.5C534.12 160.5 534.89 163.86 535.67 169.88C536.44 175.89 537.21 185.47 537.98 196.58C538.75 207.7 539.52 222.03 540.3 236.55C541.07 251.07 541.84 267.98 542.61 283.7C543.38 299.42 544.16 316.33 544.93 330.85C545.7 345.37 546.47 359.7 547.24 370.82C548.02 381.93 548.79 391.51 549.56 397.52C550.33 403.54 551.1 406.9 551.88 406.9C552.65 406.9 553.42 403.54 554.19 397.52C554.96 391.51 555.73 381.93 556.51 370.82C557.28 359.7 558.05 345.37 558.82 330.85C559.59 316.33 560.37 299.42 561.14 283.7C561.91 267.98 562.68 251.07 563.45 236.55C564.23 222.03 565 207.7 565.77 196.58C566.54 185.47 567.31 175.89 568.08 169.88C568.86 163.86 569.63 160.5 570.4 160.5C571.17 160.5 571.94 163.86 572.72 169.88C573.49 175.89 574.26 185.47 575.03 196.58C575.8 207.7 576.57 222.03 577.35 236.55C578.12 251.07 578.89 267.98 579.66 283.7C580.43 299.42 581.21 316.33 581.98 330.85C582.75 345.37 583.52 359.7 584.29 370.82C585.07 381.93 585.84 391.51 586.61 397.52C587.38 403.54 588.15 406.9 588.92 406.9C589.7 406.9 590.47 403.54 591.24 397.52C592.01 391.51 592.78 381.93 593.56 370.82C594.33 359.7 595.1 345.37 595.87 330.85C596.64 316.33 597.42 299.42 598.19 283.7C598.96 267.98 599.73 251.07 600.5 236.55C601.27 222.03 602.05 207.7 602.82 196.58C603.59 185.47 604.36 175.89 605.13 169.88C605.91 163.86 606.76 161.06 607.45 160.5C608.14 159.94 608.99 165.51 609.3 166.51" stroke="#d37230"/></g><path d="M102.44 130v5.3M102.44 438v-5.3M124.67 130v5.3M124.67 438v-5.3M146.9 130v10.6M146.9 438v-10.6M169.13 130v5.3M169.13 438v-5.3M191.36 130v5.3M191.36 438v-5.3M213.59 130v10.6M213.59 438v-10.6M235.82 130v5.3M235.82 438v-5.3M258.05 130v5.3M258.05 438v-5.3M280.28 130v10.6M280.28 438v-10.6M302.51 130v5.3M302.51 438v-5.3M324.74 130v5.3M324.74 438v-5.3M346.97 130v10.6M346.97 438v-10.6M369.2 130v5.3M369.2 438v-5.3M391.43 130v5.3M391.43 438v-5.3M413.66 130v10.6M413.66 438v-10.6M435.89 130v5.3M435.89 438v-5.3M458.12 130v5.3M458.12 438v-5.3M480.35 130v10.6M480.35 438v-10.6M502.58 130v5.3M502.58 438v-5.3M524.81 130v5.3M524.81 438v-5.3M547.04 130v10.6M547.04 438v-10.6M569.27 130v5.3M569.27 438v-5.3M591.5 130v5.3M591.5 438v-5.3M84 160.6h11M609.3 160.6h-11M84 222.3h11M609.3 222.3h-11M84 284h11M609.3 284h-11M84 345.5h11M609.3 345.5h-11M84 406.8h11M609.3 406.8h-11M84 191.45h6M609.3 191.45h-6M84 253.15h6M609.3 253.15h-6M84 314.75h6M609.3 314.75h-6M84 376.15h6M609.3 376.15h-6" stroke="#c9c9c9" stroke-width="1.3" fill="none"/><rect x="84" y="130" width="525.3" height="308" fill="none" stroke="#c9c9c9" stroke-width="1.5"/><text x="75.4" y="166.8" font-size="18.5" text-anchor="end" font-weight="bold" fill="#b9b9b9">1</text><text x="75.4" y="228.5" font-size="18.5" text-anchor="end" font-weight="bold" fill="#b9b9b9">0.5</text><text x="75.4" y="290.2" font-size="18.5" text-anchor="end" font-weight="bold" fill="#b9b9b9">0</text><text x="75.4" y="351.7" font-size="18.5" text-anchor="end" font-weight="bold" fill="#b9b9b9">-0.5</text><text x="75.4" y="413" font-size="18.5" text-anchor="end" font-weight="bold" fill="#b9b9b9">-1</text><rect x="84" y="496" width="525.3" height="307.6" fill="#111"/><path d="M146.9 496V803.6M213.59 496V803.6M280.28 496V803.6M346.97 496V803.6M413.66 496V803.6M480.35 496V803.6M547.04 496V803.6M84 538.7H609.3M84 594.6H609.3M84 650.3H609.3M84 706H609.3M84 761.8H609.3" stroke="#555555" stroke-width="1.1" fill="none"/><g clip-path="url(#cp1)" fill="none" stroke-width="2.8" stroke-linejoin="round"><path d="M84 763.78C84.15 762.86 84.36 763.42 84.89 758.26C85.42 753.09 86.43 743.39 87.21 732.78C87.98 722.18 88.75 708.49 89.52 694.63C90.29 680.76 91.07 664.61 91.84 649.6C92.61 634.59 93.38 618.43 94.15 604.55C94.92 590.68 95.7 576.97 96.47 566.35C97.24 555.72 98.01 546.56 98.78 540.8C99.56 535.05 100.33 531.82 101.1 531.81C101.87 531.8 102.64 535.01 103.42 540.75C104.19 546.5 104.96 555.65 105.73 566.27C106.5 576.9 107.28 590.61 108.05 604.49C108.82 618.38 109.59 634.56 110.36 649.6C111.13 664.64 111.91 680.83 112.68 694.72C113.45 708.62 114.22 722.35 114.99 733C115.77 743.64 116.54 752.82 117.31 758.59C118.08 764.35 118.85 767.59 119.62 767.59C120.4 767.6 121.17 764.39 121.94 758.64C122.71 752.88 123.48 743.71 124.26 733.07C125.03 722.43 125.8 708.7 126.57 694.78C127.34 680.87 128.12 664.66 128.89 649.6C129.66 634.54 130.43 618.32 131.2 604.4C131.97 590.47 132.75 576.72 133.52 566.06C134.29 555.4 135.06 546.2 135.83 540.42C136.61 534.65 137.38 531.41 138.15 531.4C138.92 531.39 139.69 534.61 140.47 540.38C141.24 546.14 142.01 555.32 142.78 565.99C143.55 576.65 144.32 590.4 145.1 604.34C145.87 618.27 146.64 634.51 147.41 649.6C148.18 664.69 148.96 680.93 149.73 694.88C150.5 708.83 151.27 722.61 152.04 733.29C152.82 743.97 153.59 753.18 154.36 758.97C155.13 764.75 155.9 767.99 156.67 768C157.45 768.01 158.22 764.79 158.99 759.01C159.76 753.24 160.53 744.04 161.31 733.36C162.08 722.68 162.85 708.9 163.62 694.94C164.39 680.98 165.17 664.72 165.94 649.6C166.71 634.48 167.48 618.21 168.25 604.24C169.02 590.27 169.8 576.47 170.57 565.77C171.34 555.07 172.11 545.84 172.88 540.05C173.66 534.25 174.43 531 175.2 530.99C175.97 530.99 176.74 534.21 177.52 540C178.29 545.78 179.06 555 179.83 565.7C180.6 576.39 181.38 590.2 182.15 604.18C182.92 618.17 183.69 634.46 184.46 649.6C185.23 664.74 186.01 681.04 186.78 695.04C187.55 709.03 188.32 722.86 189.09 733.58C189.87 744.29 190.64 753.54 191.41 759.34C192.18 765.15 192.95 768.4 193.72 768.41C194.5 768.42 195.27 765.18 196.04 759.39C196.81 753.6 197.58 744.36 198.36 733.65C199.13 722.93 199.9 709.1 200.67 695.1C201.44 681.09 202.22 664.77 202.99 649.6C203.76 634.43 204.53 618.1 205.3 604.08C206.07 590.06 206.85 576.22 207.62 565.48C208.39 554.74 209.16 545.48 209.93 539.67C210.71 533.85 211.48 530.59 212.25 530.58C213.02 530.58 213.79 533.82 214.57 539.62C215.34 545.42 216.11 554.67 216.88 565.41C217.65 576.14 218.42 589.99 219.2 604.03C219.97 618.06 220.74 634.41 221.51 649.6C222.28 664.79 223.06 681.15 223.83 695.19C224.6 709.24 225.37 723.11 226.14 733.87C226.92 744.62 227.69 753.9 228.46 759.72C229.23 765.55 230 768.81 230.77 768.82C231.55 768.83 232.32 765.58 233.09 759.77C233.86 753.96 234.63 744.69 235.41 733.94C236.18 723.19 236.95 709.31 237.72 695.25C238.49 681.2 239.27 664.82 240.04 649.6C240.81 634.38 241.58 618 242.35 603.93C243.12 589.86 243.9 575.96 244.67 565.19C245.44 554.42 246.21 545.13 246.98 539.29C247.76 533.45 248.53 530.18 249.3 530.17C250.07 530.17 250.84 533.42 251.62 539.24C252.39 545.07 253.16 554.35 253.93 565.12C254.7 575.89 255.47 589.79 256.25 603.87C257.02 617.95 257.79 634.35 258.56 649.6C259.33 664.85 260.11 681.26 260.88 695.35C261.65 709.44 262.42 723.36 263.19 734.15C263.97 744.95 264.74 754.25 265.51 760.1C266.28 765.95 267.05 769.22 267.82 769.23C268.6 769.24 269.37 765.98 270.14 760.15C270.91 754.31 271.68 745.02 272.46 734.23C273.23 723.44 274 709.51 274.77 695.41C275.54 681.31 276.32 664.87 277.09 649.6C277.86 634.33 278.63 617.89 279.4 603.77C280.18 589.65 280.95 575.71 281.72 564.9C282.49 554.09 283.26 544.77 284.03 538.91C284.81 533.06 285.58 529.77 286.35 529.77C287.12 529.76 287.89 533.02 288.67 538.86C289.44 544.71 290.21 554.02 290.98 564.83C291.75 575.64 292.52 589.58 293.3 603.71C294.07 617.84 294.84 634.3 295.61 649.6C296.38 664.9 297.16 681.37 297.93 695.51C298.7 709.65 299.47 723.62 300.24 734.44C301.02 745.27 301.79 754.61 302.56 760.48C303.33 766.34 304.1 769.63 304.88 769.64C305.65 769.65 306.42 766.38 307.19 760.52C307.96 754.67 308.73 745.34 309.51 734.52C310.28 723.69 311.05 709.72 311.82 695.57C312.59 681.41 313.37 664.93 314.14 649.6C314.91 634.27 315.68 617.78 316.45 603.61C317.23 589.45 318 575.46 318.77 564.61C319.54 553.76 320.31 544.41 321.08 538.53C321.86 532.66 322.63 529.36 323.4 529.36C324.17 529.35 324.94 532.62 325.72 538.49C326.49 544.35 327.26 553.69 328.03 564.54C328.8 575.38 329.57 589.38 330.35 603.56C331.12 617.73 331.89 634.25 332.66 649.6C333.43 664.95 334.21 681.48 334.98 695.66C335.75 709.85 336.52 723.87 337.29 734.73C338.07 745.6 338.84 754.97 339.61 760.86C340.38 766.74 341.15 770.04 341.92 770.05C342.7 770.06 343.47 766.78 344.24 760.9C345.01 755.03 345.78 745.67 346.56 734.81C347.33 723.94 348.1 709.92 348.87 695.72C349.64 681.52 350.42 664.98 351.19 649.6C351.96 634.22 352.73 617.67 353.5 603.46C354.27 589.24 355.05 575.21 355.82 564.32C356.59 553.44 357.36 544.05 358.13 538.16C358.91 532.26 359.68 528.96 360.45 528.95C361.22 528.94 361.99 532.22 362.77 538.11C363.54 543.99 364.31 553.37 365.08 564.25C365.85 575.13 366.62 589.17 367.4 603.4C368.17 617.62 368.94 634.2 369.71 649.6C370.48 665 371.26 681.58 372.03 695.82C372.8 710.06 373.57 724.12 374.34 735.02C375.12 745.92 375.89 755.33 376.66 761.23C377.43 767.14 378.2 770.45 378.98 770.46C379.75 770.46 380.52 767.17 381.29 761.28C382.06 755.39 382.83 746 383.61 735.09C384.38 724.19 385.15 710.13 385.92 695.88C386.69 681.63 387.47 665.03 388.24 649.6C389.01 634.17 389.78 617.56 390.55 603.3C391.33 589.04 392.1 574.95 392.87 564.03C393.64 553.11 394.41 543.69 395.18 537.78C395.96 531.86 396.73 528.55 397.5 528.54C398.27 528.53 399.04 531.83 399.82 537.73C400.59 543.63 401.36 553.04 402.13 563.96C402.9 574.88 403.68 588.97 404.45 603.24C405.22 617.52 405.99 634.14 406.76 649.6C407.53 665.06 408.31 681.69 409.08 695.98C409.85 710.26 410.62 724.37 411.39 735.31C412.17 746.25 412.94 755.69 413.71 761.61C414.48 767.54 415.25 770.86 416.02 770.87C416.8 770.87 417.57 767.57 418.34 761.66C419.11 755.75 419.88 746.32 420.66 735.38C421.43 724.45 422.2 710.33 422.97 696.04C423.74 681.74 424.52 665.08 425.29 649.6C426.06 634.12 426.83 617.45 427.6 603.14C428.37 588.84 429.15 574.7 429.92 563.74C430.69 552.79 431.46 543.34 432.23 537.4C433.01 531.46 433.78 528.14 434.55 528.13C435.32 528.12 436.09 531.43 436.87 537.35C437.64 543.28 438.41 552.72 439.18 563.67C439.95 574.63 440.72 588.76 441.5 603.09C442.27 617.41 443.04 634.09 443.81 649.6C444.58 665.11 445.36 681.8 446.13 696.13C446.9 710.47 447.67 724.63 448.44 735.6C449.22 746.58 449.99 756.04 450.76 761.99C451.53 767.94 452.3 771.27 453.07 771.28C453.85 771.28 454.62 767.97 455.39 762.04C456.16 756.1 456.93 746.65 457.71 735.67C458.48 724.7 459.25 710.54 460.02 696.19C460.79 681.85 461.57 665.13 462.34 649.6C463.11 634.07 463.88 617.35 464.65 602.99C465.42 588.63 466.2 574.45 466.97 563.45C467.74 552.46 468.51 542.98 469.28 537.02C470.06 531.07 470.83 527.73 471.6 527.72C472.37 527.71 473.14 531.03 473.92 536.97C474.69 542.92 475.46 552.39 476.23 563.38C477 574.37 477.77 588.56 478.55 602.93C479.32 617.3 480.09 634.04 480.86 649.6C481.63 665.16 482.41 681.91 483.18 696.29C483.95 710.67 484.72 724.88 485.49 735.89C486.27 746.9 487.04 756.4 487.81 762.37C488.58 768.33 489.35 771.68 490.12 771.68C490.9 771.69 491.67 768.37 492.44 762.41C493.21 756.46 493.98 746.97 494.76 735.96C495.53 724.95 496.3 710.74 497.07 696.35C497.84 681.96 498.62 665.19 499.39 649.6C500.16 634.01 500.93 617.24 501.7 602.83C502.48 588.43 503.25 574.2 504.02 563.16C504.79 552.13 505.56 542.62 506.33 536.64C507.11 530.67 507.88 527.32 508.65 527.31C509.42 527.3 510.19 530.63 510.97 536.6C511.74 542.56 512.51 552.06 513.28 563.09C514.05 574.12 514.82 588.35 515.6 602.77C516.37 617.19 517.14 633.99 517.91 649.6C518.68 665.21 519.46 682.02 520.23 696.45C521 710.88 521.77 725.13 522.54 736.18C523.32 747.23 524.09 756.76 524.86 762.75C525.63 768.73 526.4 772.09 527.17 772.09C527.95 772.1 528.72 768.77 529.49 762.79C530.26 756.82 531.03 747.3 531.81 736.25C532.58 725.2 533.35 710.95 534.12 696.51C534.89 682.06 535.67 665.24 536.44 649.6C537.21 633.96 537.98 617.13 538.75 602.67C539.52 588.22 540.3 573.94 541.07 562.88C541.84 551.81 542.61 542.26 543.38 536.27C544.16 530.27 544.93 526.91 545.7 526.9C546.47 526.89 547.24 530.23 548.02 536.22C548.79 542.2 549.56 551.74 550.33 562.8C551.1 573.87 551.87 588.15 552.65 602.62C553.42 617.08 554.19 633.94 554.96 649.6C555.73 665.26 556.51 682.13 557.28 696.6C558.05 711.08 558.82 725.38 559.59 736.47C560.37 747.56 561.14 757.12 561.91 763.12C562.68 769.13 563.45 772.49 564.22 772.5C565 772.51 565.77 769.16 566.54 763.17C567.31 757.18 568.08 747.63 568.86 736.54C569.63 725.46 570.4 711.15 571.17 696.66C571.94 682.17 572.72 665.29 573.49 649.6C574.26 633.91 575.03 617.02 575.8 602.52C576.57 588.02 577.35 573.69 578.12 562.59C578.89 551.48 579.66 541.9 580.43 535.89C581.21 529.87 581.98 526.5 582.75 526.49C583.52 526.49 584.29 529.84 585.07 535.84C585.84 541.84 586.61 551.41 587.38 562.51C588.15 573.62 588.92 587.95 589.7 602.46C590.47 616.97 591.24 633.88 592.01 649.6C592.78 665.32 593.56 682.23 594.33 696.76C595.1 711.29 595.87 725.63 596.64 736.76C597.42 747.88 598.19 757.48 598.96 763.5C599.73 769.53 600.5 772.9 601.27 772.91C602.05 772.92 602.82 769.56 603.59 763.55C604.36 757.54 605.13 747.95 605.91 736.83C606.68 725.71 607.66 707.07 608.22 696.82C608.79 686.56 609.12 678.89 609.3 675.31" stroke="#dfc955"/><path d="M84 616.88C84.28 622.33 85 636.64 85.66 649.6C86.33 662.56 87.21 680.75 87.98 694.62C88.75 708.49 89.52 722.19 90.29 732.8C91.07 743.42 91.84 752.58 92.61 758.34C93.38 764.09 94.15 767.31 94.92 767.32C95.7 767.33 96.47 764.12 97.24 758.38C98.01 752.64 98.78 743.49 99.56 732.88C100.33 722.26 101.1 708.56 101.87 694.68C102.64 680.8 103.42 664.63 104.19 649.6C104.96 634.57 105.73 618.39 106.5 604.5C107.27 590.61 108.05 576.89 108.82 566.25C109.59 555.61 110.36 546.44 111.13 540.67C111.91 534.91 112.68 531.68 113.45 531.67C114.22 531.67 114.99 534.88 115.77 540.63C116.54 546.38 117.31 555.54 118.08 566.18C118.85 576.81 119.62 590.54 120.4 604.44C121.17 618.35 121.94 634.54 122.71 649.6C123.48 664.66 124.26 680.86 125.03 694.78C125.8 708.69 126.57 722.44 127.34 733.09C128.12 743.75 128.89 752.94 129.66 758.71C130.43 764.49 131.2 767.72 131.97 767.73C132.75 767.74 133.52 764.52 134.29 758.76C135.06 753 135.83 743.82 136.61 733.17C137.38 722.51 138.15 708.76 138.92 694.84C139.69 680.91 140.47 664.68 141.24 649.6C142.01 634.52 142.78 618.28 143.55 604.34C144.32 590.4 145.1 576.64 145.87 565.96C146.64 555.29 147.41 546.08 148.18 540.3C148.96 534.51 149.73 531.27 150.5 531.27C151.27 531.26 152.04 534.48 152.82 540.25C153.59 546.02 154.36 555.22 155.13 565.89C155.9 576.56 156.67 590.33 157.45 604.29C158.22 618.24 158.99 634.49 159.76 649.6C160.53 664.71 161.31 680.97 162.08 694.93C162.85 708.9 163.62 722.69 164.39 733.38C165.17 744.08 165.94 753.3 166.71 759.09C167.48 764.88 168.25 768.13 169.02 768.14C169.8 768.15 170.57 764.92 171.34 759.14C172.11 753.36 172.88 744.15 173.66 733.46C174.43 722.76 175.2 708.97 175.97 694.99C176.74 681.02 177.52 664.73 178.29 649.6C179.06 634.47 179.83 618.18 180.6 604.19C181.37 590.2 182.15 576.38 182.92 565.67C183.69 554.96 184.46 545.72 185.23 539.92C186.01 534.12 186.78 530.86 187.55 530.86C188.32 530.85 189.09 534.08 189.87 539.87C190.64 545.66 191.41 554.89 192.18 565.6C192.95 576.31 193.72 590.13 194.5 604.13C195.27 618.13 196.04 634.44 196.81 649.6C197.58 664.76 198.36 681.08 199.13 695.09C199.9 709.1 200.67 722.94 201.44 733.67C202.22 744.4 202.99 753.66 203.76 759.47C204.53 765.28 205.3 768.54 206.07 768.55C206.85 768.56 207.62 765.32 208.39 759.52C209.16 753.72 209.93 744.47 210.71 733.75C211.48 723.02 212.25 709.17 213.02 695.15C213.79 681.12 214.57 664.79 215.34 649.6C216.11 634.41 216.88 618.07 217.65 604.03C218.42 590 219.2 576.13 219.97 565.38C220.74 554.63 221.51 545.36 222.28 539.54C223.06 533.72 223.83 530.46 224.6 530.45C225.37 530.44 226.14 533.68 226.92 539.49C227.69 545.3 228.46 554.56 229.23 565.31C230 576.06 230.78 589.92 231.55 603.97C232.32 618.02 233.09 634.39 233.86 649.6C234.63 664.81 235.41 681.19 236.18 695.25C236.95 709.31 237.72 723.2 238.49 733.96C239.27 744.73 240.04 754.02 240.81 759.85C241.58 765.68 242.35 768.95 243.12 768.96C243.9 768.96 244.67 765.72 245.44 759.9C246.21 754.07 246.98 744.8 247.76 734.03C248.53 723.27 249.3 709.38 250.07 695.31C250.84 681.23 251.62 664.84 252.39 649.6C253.16 634.36 253.93 617.96 254.7 603.88C255.47 589.79 256.25 575.88 257.02 565.09C257.79 554.31 258.56 545.01 259.33 539.16C260.11 533.32 260.88 530.05 261.65 530.04C262.42 530.03 263.19 533.29 263.97 539.12C264.74 544.95 265.51 554.24 266.28 565.02C267.05 575.8 267.82 589.72 268.6 603.82C269.37 617.91 270.14 634.34 270.91 649.6C271.68 664.86 272.46 681.29 273.23 695.4C274 709.51 274.77 723.45 275.54 734.25C276.32 745.05 277.09 754.37 277.86 760.23C278.63 766.08 279.4 769.36 280.17 769.37C280.95 769.37 281.72 766.11 282.49 760.27C283.26 754.43 284.03 745.13 284.81 734.32C285.58 723.52 286.35 709.58 287.12 695.46C287.89 681.34 288.67 664.89 289.44 649.6C290.21 634.31 290.98 617.85 291.75 603.72C292.52 589.59 293.3 575.63 294.07 564.8C294.84 553.98 295.61 544.65 296.38 538.79C297.16 532.92 297.93 529.64 298.7 529.63C299.47 529.62 300.24 532.89 301.02 538.74C301.79 544.59 302.56 553.91 303.33 564.73C304.1 575.55 304.87 589.52 305.65 603.66C306.42 617.8 307.19 634.28 307.96 649.6C308.73 664.92 309.51 681.4 310.28 695.56C311.05 709.72 311.82 723.7 312.59 734.54C313.37 745.38 314.14 754.73 314.91 760.6C315.68 766.48 316.45 769.77 317.22 769.78C318 769.78 318.77 766.51 319.54 760.65C320.31 754.79 321.08 745.45 321.86 734.61C322.63 723.77 323.4 709.79 324.17 695.62C324.94 681.45 325.72 664.94 326.49 649.6C327.26 634.26 328.03 617.74 328.8 603.56C329.57 589.38 330.35 575.37 331.12 564.51C331.89 553.66 332.66 544.29 333.43 538.41C334.21 532.52 334.98 529.23 335.75 529.22C336.52 529.21 337.29 532.49 338.07 538.36C338.84 544.23 339.61 553.59 340.38 564.44C341.15 575.3 341.92 589.31 342.7 603.5C343.47 617.7 344.24 634.23 345.01 649.6C345.78 664.97 346.56 681.51 347.33 695.72C348.1 709.92 348.87 723.95 349.64 734.83C350.42 745.71 351.19 755.09 351.96 760.98C352.73 766.87 353.5 770.18 354.27 770.18C355.05 770.19 355.82 766.91 356.59 761.03C357.36 755.15 358.13 745.78 358.91 734.9C359.68 724.03 360.45 709.99 361.22 695.77C361.99 681.56 362.77 664.99 363.54 649.6C364.31 634.21 365.08 617.63 365.85 603.41C366.62 589.18 367.4 575.12 368.17 564.23C368.94 553.33 369.71 543.93 370.48 538.03C371.26 532.13 372.03 528.82 372.8 528.81C373.57 528.8 374.34 532.09 375.12 537.98C375.89 543.87 376.66 553.26 377.43 564.15C378.2 575.05 378.98 589.11 379.75 603.35C380.52 617.59 381.29 634.18 382.06 649.6C382.83 665.02 383.61 681.62 384.38 695.87C385.15 710.13 385.92 724.2 386.69 735.12C387.47 746.03 388.24 755.45 389.01 761.36C389.78 767.27 390.55 770.59 391.32 770.59C392.1 770.6 392.87 767.31 393.64 761.41C394.41 755.51 395.18 746.1 395.96 735.19C396.73 724.28 397.5 710.2 398.27 695.93C399.04 681.67 399.82 665.05 400.59 649.6C401.36 634.15 402.13 617.53 402.9 603.25C403.67 588.97 404.45 574.87 405.22 563.94C405.99 553 406.76 543.57 407.53 537.65C408.31 531.73 409.08 528.41 409.85 528.4C410.62 528.39 411.39 531.69 412.17 537.6C412.94 543.51 413.71 552.93 414.48 563.86C415.25 574.8 416.02 588.9 416.8 603.19C417.57 617.48 418.34 634.13 419.11 649.6C419.88 665.07 420.66 681.73 421.43 696.03C422.2 710.33 422.97 724.46 423.74 735.41C424.52 746.36 425.29 755.81 426.06 761.74C426.83 767.67 427.6 770.99 428.37 771C429.15 771.01 429.92 767.71 430.69 761.78C431.46 755.86 432.23 746.43 433.01 735.48C433.78 724.53 434.55 710.4 435.32 696.09C436.09 681.77 436.87 665.1 437.64 649.6C438.41 634.1 439.18 617.42 439.95 603.09C440.72 588.77 441.5 574.62 442.27 563.65C443.04 552.68 443.81 543.22 444.58 537.27C445.36 531.33 446.13 528 446.9 527.99C447.67 527.99 448.44 531.3 449.22 537.23C449.99 543.16 450.76 552.61 451.53 563.57C452.3 574.54 453.07 588.7 453.85 603.03C454.62 617.37 455.39 634.07 456.16 649.6C456.93 665.13 457.71 681.84 458.48 696.19C459.25 710.54 460.02 724.71 460.79 735.7C461.57 746.69 462.34 756.16 463.11 762.12C463.88 768.07 464.65 771.4 465.42 771.41C466.2 771.42 466.97 768.1 467.74 762.16C468.51 756.22 469.28 746.76 470.06 735.77C470.83 724.78 471.6 710.61 472.37 696.24C473.14 681.88 473.92 665.15 474.69 649.6C475.46 634.05 476.23 617.31 477 602.94C477.77 588.56 478.55 574.36 479.32 563.36C480.09 552.35 480.86 542.86 481.63 536.9C482.41 530.93 483.18 527.59 483.95 527.58C484.72 527.58 485.49 530.9 486.27 536.85C487.04 542.8 487.81 552.28 488.58 563.29C489.35 574.29 490.12 588.49 490.9 602.88C491.67 617.26 492.44 634.02 493.21 649.6C493.98 665.18 494.76 681.94 495.53 696.34C496.3 710.74 497.07 724.96 497.84 735.99C498.62 747.01 499.39 756.52 500.16 762.49C500.93 768.47 501.7 771.81 502.47 771.82C503.25 771.83 504.02 768.5 504.79 762.54C505.56 756.58 506.33 747.08 507.11 736.06C507.88 725.04 508.65 710.81 509.42 696.4C510.19 681.99 510.97 665.2 511.74 649.6C512.51 634 513.28 617.2 514.05 602.78C514.82 588.36 515.6 574.11 516.37 563.07C517.14 552.02 517.91 542.5 518.68 536.52C519.46 530.54 520.23 527.18 521 527.17C521.77 527.17 522.54 530.5 523.32 536.47C524.09 542.44 524.86 551.95 525.63 563C526.4 574.04 527.17 588.29 527.95 602.72C528.72 617.15 529.49 633.97 530.26 649.6C531.03 665.23 531.81 682.05 532.58 696.5C533.35 710.94 534.12 725.21 534.89 736.28C535.67 747.34 536.44 756.88 537.21 762.87C537.98 768.86 538.75 772.22 539.52 772.23C540.3 772.24 541.07 768.9 541.84 762.92C542.61 756.94 543.38 747.41 544.16 736.35C544.93 725.29 545.7 711.02 546.47 696.56C547.24 682.1 548.02 665.26 548.79 649.6C549.56 633.94 550.33 617.09 551.1 602.62C551.88 588.15 552.65 573.86 553.42 562.78C554.19 551.7 554.96 542.14 555.73 536.14C556.51 530.14 557.28 526.77 558.05 526.77C558.82 526.76 559.59 530.1 560.37 536.09C561.14 542.08 561.91 551.63 562.68 562.71C563.45 573.79 564.22 588.08 565 602.56C565.77 617.05 566.54 633.92 567.31 649.6C568.08 665.28 568.86 682.16 569.63 696.66C570.4 711.15 571.17 725.47 571.94 736.57C572.72 747.66 573.49 757.24 574.26 763.25C575.03 769.26 575.8 772.63 576.57 772.64C577.35 772.65 578.12 769.3 578.89 763.3C579.66 757.3 580.43 747.73 581.21 736.64C581.98 725.54 582.75 711.22 583.52 696.71C584.29 682.21 585.07 665.31 585.84 649.6C586.61 633.89 587.38 616.98 588.15 602.47C588.92 587.95 589.7 573.61 590.47 562.49C591.24 551.37 592.01 541.78 592.78 535.76C593.56 529.74 594.33 526.36 595.1 526.36C595.87 526.35 596.64 529.7 597.42 535.71C598.19 541.72 598.96 551.3 599.73 562.42C600.5 573.53 601.27 587.88 602.05 602.41C602.82 616.94 603.59 633.87 604.36 649.6C605.13 665.33 605.91 682.27 606.68 696.81C607.45 711.35 608.56 729.45 608.99 736.85C609.43 744.26 609.25 740.53 609.3 741.27" stroke="#4986d2"/><path d="M84 568.14C84.02 567.85 83.71 570.98 84.12 566.44C84.52 561.91 85.66 546.68 86.43 540.93C87.21 535.18 87.98 531.96 88.75 531.95C89.52 531.94 90.29 535.14 91.07 540.88C91.84 546.62 92.61 555.76 93.38 566.37C94.15 576.98 94.93 590.68 95.7 604.55C96.47 618.42 97.24 634.58 98.01 649.6C98.78 664.62 99.56 680.79 100.33 694.67C101.1 708.56 101.87 722.27 102.64 732.9C103.42 743.53 104.19 752.7 104.96 758.46C105.73 764.22 106.5 767.45 107.28 767.46C108.05 767.46 108.82 764.26 109.59 758.51C110.36 752.76 111.13 743.6 111.91 732.97C112.68 722.34 113.45 708.63 114.22 694.73C114.99 680.84 115.77 664.65 116.54 649.6C117.31 634.55 118.08 618.36 118.85 604.45C119.62 590.54 120.4 576.8 121.17 566.15C121.94 555.5 122.71 546.32 123.48 540.55C124.26 534.78 125.03 531.55 125.8 531.54C126.57 531.53 127.34 534.74 128.12 540.5C128.89 546.26 129.66 555.43 130.43 566.08C131.2 576.73 131.97 590.47 132.75 604.39C133.52 618.31 134.29 634.53 135.06 649.6C135.83 664.67 136.61 680.9 137.38 694.83C138.15 708.76 138.92 722.52 139.69 733.19C140.47 743.86 141.24 753.06 142.01 758.84C142.78 764.62 143.55 767.86 144.32 767.87C145.1 767.87 145.87 764.65 146.64 758.89C147.41 753.12 148.18 743.93 148.96 733.26C149.73 722.6 150.5 708.83 151.27 694.89C152.04 680.94 152.82 664.7 153.59 649.6C154.36 634.5 155.13 618.25 155.9 604.29C156.67 590.34 157.45 576.55 158.22 565.86C158.99 555.18 159.76 545.96 160.53 540.17C161.31 534.38 162.08 531.14 162.85 531.13C163.62 531.12 164.39 534.35 165.17 540.12C165.94 545.9 166.71 555.11 167.48 565.79C168.25 576.48 169.03 590.27 169.8 604.23C170.57 618.2 171.34 634.47 172.11 649.6C172.88 664.73 173.66 681.01 174.43 694.99C175.2 708.97 175.97 722.77 176.74 733.48C177.52 744.19 178.29 753.42 179.06 759.22C179.83 765.02 180.6 768.27 181.38 768.28C182.15 768.28 182.92 765.05 183.69 759.27C184.46 753.48 185.23 744.26 186.01 733.55C186.78 722.85 187.55 709.04 188.32 695.04C189.09 681.05 189.87 664.75 190.64 649.6C191.41 634.45 192.18 618.14 192.95 604.14C193.72 590.13 194.5 576.3 195.27 565.58C196.04 554.85 196.81 545.6 197.58 539.79C198.36 533.98 199.13 530.73 199.9 530.72C200.67 530.71 201.44 533.95 202.22 539.75C202.99 545.54 203.76 554.78 204.53 565.5C205.3 576.23 206.08 590.06 206.85 604.08C207.62 618.09 208.39 634.42 209.16 649.6C209.93 664.78 210.71 681.11 211.48 695.14C212.25 709.17 213.02 723.03 213.79 733.77C214.57 744.51 215.34 753.78 216.11 759.6C216.88 765.42 217.65 768.68 218.43 768.68C219.2 768.69 219.97 765.45 220.74 759.64C221.51 753.84 222.28 744.58 223.06 733.84C223.83 723.1 224.6 709.24 225.37 695.2C226.14 681.16 226.92 664.8 227.69 649.6C228.46 634.4 229.23 618.03 230 603.98C230.77 589.93 231.55 576.05 232.32 565.29C233.09 554.53 233.86 545.24 234.63 539.42C235.41 533.59 236.18 530.32 236.95 530.31C237.72 530.3 238.49 533.55 239.27 539.37C240.04 545.19 240.81 554.46 241.58 565.21C242.35 575.97 243.12 589.86 243.9 603.92C244.67 617.99 245.44 634.37 246.21 649.6C246.98 664.83 247.76 681.22 248.53 695.3C249.3 709.38 250.07 723.28 250.84 734.06C251.62 744.84 252.39 754.13 253.16 759.97C253.93 765.81 254.7 769.09 255.47 769.09C256.25 769.1 257.02 765.85 257.79 760.02C258.56 754.19 259.33 744.91 260.11 734.13C260.88 723.35 261.65 709.45 262.42 695.36C263.19 681.27 263.97 664.86 264.74 649.6C265.51 634.34 266.28 617.92 267.05 603.82C267.82 589.72 268.6 575.79 269.37 565C270.14 554.2 270.91 544.89 271.68 539.04C272.46 533.19 273.23 529.91 274 529.9C274.77 529.89 275.54 533.15 276.32 538.99C277.09 544.83 277.86 554.13 278.63 564.92C279.4 575.72 280.17 589.65 280.95 603.76C281.72 617.88 282.49 634.32 283.26 649.6C284.03 664.88 284.81 681.33 285.58 695.46C286.35 709.58 287.12 723.53 287.89 734.35C288.67 745.16 289.44 754.49 290.21 760.35C290.98 766.21 291.75 769.49 292.52 769.5C293.3 769.51 294.07 766.25 294.84 760.4C295.61 754.55 296.38 745.23 297.16 734.42C297.93 723.61 298.7 709.65 299.47 695.51C300.24 681.38 301.02 664.91 301.79 649.6C302.56 634.29 303.33 617.82 304.1 603.67C304.88 589.52 305.65 575.54 306.42 564.71C307.19 553.87 307.96 544.53 308.73 538.66C309.51 532.79 310.28 529.5 311.05 529.49C311.82 529.49 312.59 532.75 313.37 538.61C314.14 544.47 314.91 553.8 315.68 564.64C316.45 575.47 317.22 589.45 318 603.61C318.77 617.77 319.54 634.27 320.31 649.6C321.08 664.93 321.86 681.44 322.63 695.61C323.4 709.78 324.17 723.78 324.94 734.64C325.72 745.49 326.49 754.85 327.26 760.73C328.03 766.61 328.8 769.9 329.57 769.91C330.35 769.92 331.12 766.64 331.89 760.78C332.66 754.91 333.43 745.56 334.21 734.71C334.98 723.86 335.75 709.86 336.52 695.67C337.29 681.49 338.07 664.96 338.84 649.6C339.61 634.24 340.38 617.71 341.15 603.51C341.93 589.31 342.7 575.29 343.47 564.42C344.24 553.55 345.01 544.17 345.78 538.28C346.56 532.39 347.33 529.09 348.1 529.08C348.87 529.08 349.64 532.36 350.42 538.23C351.19 544.11 351.96 553.48 352.73 564.35C353.5 575.22 354.27 589.24 355.05 603.45C355.82 617.66 356.59 634.21 357.36 649.6C358.13 664.99 358.91 681.55 359.68 695.77C360.45 709.99 361.22 724.04 361.99 734.93C362.77 745.82 363.54 755.21 364.31 761.11C365.08 767.01 365.85 770.31 366.62 770.32C367.4 770.33 368.17 767.04 368.94 761.15C369.71 755.27 370.48 745.89 371.26 735C372.03 724.11 372.8 710.06 373.57 695.83C374.34 681.59 375.12 665.01 375.89 649.6C376.66 634.19 377.43 617.6 378.2 603.35C378.98 589.11 379.75 575.04 380.52 564.13C381.29 553.22 382.06 543.81 382.83 537.9C383.61 531.99 384.38 528.68 385.15 528.67C385.92 528.67 386.69 531.96 387.47 537.86C388.24 543.75 389.01 553.15 389.78 564.06C390.55 574.96 391.33 589.04 392.1 603.29C392.87 617.55 393.64 634.16 394.41 649.6C395.18 665.04 395.96 681.66 396.73 695.92C397.5 710.19 398.27 724.29 399.04 735.22C399.82 746.14 400.59 755.57 401.36 761.49C402.13 767.4 402.9 770.72 403.68 770.73C404.45 770.74 405.22 767.44 405.99 761.53C406.76 755.63 407.53 746.21 408.31 735.29C409.08 724.36 409.85 710.26 410.62 695.98C411.39 681.7 412.17 665.06 412.94 649.6C413.71 634.14 414.48 617.49 415.25 603.2C416.02 588.9 416.8 574.79 417.57 563.84C418.34 552.89 419.11 543.45 419.88 537.53C420.66 531.6 421.43 528.27 422.2 528.27C422.97 528.26 423.74 531.56 424.52 537.48C425.29 543.4 426.06 552.82 426.83 563.77C427.6 574.71 428.38 588.83 429.15 603.14C429.92 617.44 430.69 634.11 431.46 649.6C432.23 665.09 433.01 681.76 433.78 696.08C434.55 710.4 435.32 724.54 436.09 735.5C436.87 746.47 437.64 755.92 438.41 761.86C439.18 767.8 439.95 771.13 440.72 771.14C441.5 771.15 442.27 767.84 443.04 761.91C443.81 755.98 444.58 746.54 445.36 735.58C446.13 724.62 446.9 710.47 447.67 696.14C448.44 681.81 449.22 665.12 449.99 649.6C450.76 634.08 451.53 617.38 452.3 603.04C453.07 588.7 453.85 574.53 454.62 563.55C455.39 552.57 456.16 543.1 456.93 537.15C457.71 531.2 458.48 527.86 459.25 527.86C460.02 527.85 460.79 531.16 461.57 537.1C462.34 543.04 463.11 552.5 463.88 563.48C464.65 574.46 465.42 588.63 466.2 602.98C466.97 617.34 467.74 634.06 468.51 649.6C469.28 665.14 470.06 681.87 470.83 696.24C471.6 710.6 472.37 724.79 473.14 735.79C473.92 746.79 474.69 756.28 475.46 762.24C476.23 768.2 477 771.54 477.77 771.55C478.55 771.56 479.32 768.24 480.09 762.29C480.86 756.34 481.63 746.86 482.41 735.87C483.18 724.87 483.95 710.67 484.72 696.3C485.49 681.92 486.27 665.17 487.04 649.6C487.81 634.03 488.58 617.27 489.35 602.88C490.12 588.49 490.9 574.28 491.67 563.26C492.44 552.24 493.21 542.74 493.98 536.77C494.76 530.8 495.53 527.46 496.3 527.45C497.07 527.44 497.84 530.77 498.62 536.72C499.39 542.68 500.16 552.17 500.93 563.19C501.7 574.21 502.47 588.42 503.25 602.82C504.02 617.23 504.79 634.01 505.56 649.6C506.33 665.19 507.11 681.98 507.88 696.39C508.65 710.81 509.42 725.05 510.19 736.08C510.97 747.12 511.74 756.64 512.51 762.62C513.28 768.6 514.05 771.95 514.82 771.96C515.6 771.96 516.37 768.63 517.14 762.67C517.91 756.7 518.68 747.19 519.46 736.16C520.23 725.12 521 710.88 521.77 696.45C522.54 682.03 523.32 665.22 524.09 649.6C524.86 633.98 525.63 617.17 526.4 602.73C527.17 588.29 527.95 574.03 528.72 562.97C529.49 551.92 530.26 542.38 531.03 536.39C531.81 530.4 532.58 527.05 533.35 527.04C534.12 527.03 534.89 530.37 535.67 536.34C536.44 542.32 537.21 551.85 537.98 562.9C538.75 573.95 539.52 588.22 540.3 602.67C541.07 617.12 541.84 633.95 542.61 649.6C543.38 665.25 544.16 682.09 544.93 696.55C545.7 711.01 546.47 725.3 547.24 736.37C548.02 747.45 548.79 757 549.56 763C550.33 769 551.1 772.36 551.88 772.37C552.65 772.37 553.42 769.03 554.19 763.04C554.96 757.06 555.73 747.52 556.51 736.44C557.28 725.37 558.05 711.08 558.82 696.61C559.59 682.14 560.37 665.27 561.14 649.6C561.91 633.93 562.68 617.06 563.45 602.57C564.23 588.08 565 573.78 565.77 562.68C566.54 551.59 567.31 542.02 568.08 536.01C568.86 530 569.63 526.64 570.4 526.63C571.17 526.62 571.94 529.97 572.72 535.97C573.49 541.96 574.26 551.52 575.03 562.61C575.8 573.7 576.57 588.01 577.35 602.51C578.12 617.01 578.89 633.9 579.66 649.6C580.43 665.3 581.21 682.2 581.98 696.71C582.75 711.22 583.52 725.55 584.29 736.66C585.07 747.77 585.84 757.36 586.61 763.38C587.38 769.39 588.15 772.77 588.92 772.78C589.7 772.78 590.47 769.43 591.24 763.42C592.01 757.42 592.78 747.84 593.56 736.73C594.33 725.62 595.1 711.29 595.87 696.77C596.64 682.24 597.42 665.33 598.19 649.6C598.96 633.87 599.73 616.95 600.5 602.41C601.27 587.88 602.05 573.52 602.82 562.39C603.59 551.26 604.36 541.66 605.13 535.64C605.91 529.61 606.76 526.79 607.45 526.22C608.14 525.65 608.99 531.22 609.3 532.22" stroke="#d37230"/></g><path d="M102.44 496v5.3M102.44 803.6v-5.3M124.67 496v5.3M124.67 803.6v-5.3M146.9 496v10.6M146.9 803.6v-10.6M169.13 496v5.3M169.13 803.6v-5.3M191.36 496v5.3M191.36 803.6v-5.3M213.59 496v10.6M213.59 803.6v-10.6M235.82 496v5.3M235.82 803.6v-5.3M258.05 496v5.3M258.05 803.6v-5.3M280.28 496v10.6M280.28 803.6v-10.6M302.51 496v5.3M302.51 803.6v-5.3M324.74 496v5.3M324.74 803.6v-5.3M346.97 496v10.6M346.97 803.6v-10.6M369.2 496v5.3M369.2 803.6v-5.3M391.43 496v5.3M391.43 803.6v-5.3M413.66 496v10.6M413.66 803.6v-10.6M435.89 496v5.3M435.89 803.6v-5.3M458.12 496v5.3M458.12 803.6v-5.3M480.35 496v10.6M480.35 803.6v-10.6M502.58 496v5.3M502.58 803.6v-5.3M524.81 496v5.3M524.81 803.6v-5.3M547.04 496v10.6M547.04 803.6v-10.6M569.27 496v5.3M569.27 803.6v-5.3M591.5 496v5.3M591.5 803.6v-5.3M84 538.7h11M609.3 538.7h-11M84 594.6h11M609.3 594.6h-11M84 650.3h11M609.3 650.3h-11M84 706h11M609.3 706h-11M84 761.8h11M609.3 761.8h-11M84 510.8h6M609.3 510.8h-6M84 566.65h6M609.3 566.65h-6M84 622.45h6M609.3 622.45h-6M84 678.15h6M609.3 678.15h-6M84 733.9h6M609.3 733.9h-6M84 789.7h6M609.3 789.7h-6" stroke="#c9c9c9" stroke-width="1.3" fill="none"/><rect x="84" y="496" width="525.3" height="307.6" fill="none" stroke="#c9c9c9" stroke-width="1.5"/><text x="75.4" y="544.9" font-size="18.5" text-anchor="end" font-weight="bold" fill="#b9b9b9">0.4</text><text x="75.4" y="600.8" font-size="18.5" text-anchor="end" font-weight="bold" fill="#b9b9b9">0.2</text><text x="75.4" y="656.5" font-size="18.5" text-anchor="end" font-weight="bold" fill="#b9b9b9">0</text><text x="75.4" y="712.2" font-size="18.5" text-anchor="end" font-weight="bold" fill="#b9b9b9">-0.2</text><text x="75.4" y="768" font-size="18.5" text-anchor="end" font-weight="bold" fill="#b9b9b9">-0.4</text><rect x="84" y="860.2" width="525.3" height="307.5" fill="#111"/><path d="M146.9 860.2V1167.7M213.59 860.2V1167.7M280.28 860.2V1167.7M346.97 860.2V1167.7M413.66 860.2V1167.7M480.35 860.2V1167.7M547.04 860.2V1167.7M84 923H609.3M84 999.3H609.3M84 1075H609.3M84 1149.8H609.3" stroke="#555555" stroke-width="1.1" fill="none"/><path clip-path="url(#cp2)" d="M83.3 1137.3C84.85 1137.22 88.85 1137.68 92.6 1136.8C96.35 1135.92 101.4 1134.57 105.8 1132C110.2 1129.43 114.58 1125.37 119 1121.4C123.42 1117.43 127.67 1113.27 132.3 1108.2C136.93 1103.13 142.4 1096.28 146.8 1091C151.2 1085.72 154.5 1081.57 158.7 1076.5C162.9 1071.43 167.58 1065.68 172 1060.6C176.42 1055.52 180.8 1050.63 185.2 1046C189.6 1041.37 194.43 1036.32 198.4 1032.8C202.37 1029.28 205.9 1026.83 209 1024.9C212.1 1022.97 213.92 1021.88 217 1021.2C220.08 1020.52 224 1020.72 227.5 1020.8C231 1020.88 234.92 1021.28 238 1021.7C241.08 1022.12 243.12 1023 246 1023.3C248.88 1023.6 252.22 1023.88 255.3 1023.5C258.38 1023.12 261.22 1022.32 264.5 1021C267.78 1019.68 271.02 1018.27 275 1015.6C278.98 1012.93 283.53 1009.85 288.4 1005C293.27 1000.15 299.35 991.78 304.2 986.5C309.05 981.22 312.65 977.93 317.5 973.3C322.35 968.67 328.45 962.8 333.3 958.7C338.15 954.6 343.07 950.78 346.6 948.7C350.13 946.62 351.93 946.72 354.5 946.2C357.07 945.68 359.35 945.63 362 945.6C364.65 945.57 367.23 945.22 370.4 946C373.57 946.78 377.48 949.13 381 950.3C384.52 951.47 388 952.55 391.5 953C395 953.45 398.47 953.37 402 953C405.53 952.63 408.7 952.13 412.7 950.8C416.7 949.47 421.62 947.43 426 945C430.38 942.57 434.6 939.42 439 936.2C443.4 932.98 447.97 929.23 452.4 925.7C456.83 922.17 461.2 918.32 465.6 915C470 911.68 474.83 907.98 478.8 905.8C482.77 903.62 486.7 902.63 489.4 901.9C492.1 901.17 493.23 901.4 495 901.4C496.77 901.4 497.4 900.97 500 901.9C502.6 902.83 506.63 904.93 510.6 907C514.57 909.07 519.83 912.42 523.8 914.3C527.77 916.18 531.32 917.42 534.4 918.3C537.48 919.18 539.2 919.6 542.3 919.6C545.4 919.6 549.47 919.18 553 918.3C556.53 917.42 559.55 916.02 563.5 914.3C567.45 912.58 572.28 910.38 576.7 908C581.12 905.62 586.03 902.27 590 900C593.97 897.73 597.25 895.93 600.5 894.4C603.75 892.87 608 891.4 609.5 890.8" fill="none" stroke="#e6d562" stroke-width="3.4" stroke-linejoin="round"/><path d="M102.44 860.2v5.3M102.44 1167.7v-5.3M124.67 860.2v5.3M124.67 1167.7v-5.3M146.9 860.2v10.6M146.9 1167.7v-10.6M169.13 860.2v5.3M169.13 1167.7v-5.3M191.36 860.2v5.3M191.36 1167.7v-5.3M213.59 860.2v10.6M213.59 1167.7v-10.6M235.82 860.2v5.3M235.82 1167.7v-5.3M258.05 860.2v5.3M258.05 1167.7v-5.3M280.28 860.2v10.6M280.28 1167.7v-10.6M302.51 860.2v5.3M302.51 1167.7v-5.3M324.74 860.2v5.3M324.74 1167.7v-5.3M346.97 860.2v10.6M346.97 1167.7v-10.6M369.2 860.2v5.3M369.2 1167.7v-5.3M391.43 860.2v5.3M391.43 1167.7v-5.3M413.66 860.2v10.6M413.66 1167.7v-10.6M435.89 860.2v5.3M435.89 1167.7v-5.3M458.12 860.2v5.3M458.12 1167.7v-5.3M480.35 860.2v10.6M480.35 1167.7v-10.6M502.58 860.2v5.3M502.58 1167.7v-5.3M524.81 860.2v5.3M524.81 1167.7v-5.3M547.04 860.2v10.6M547.04 1167.7v-10.6M569.27 860.2v5.3M569.27 1167.7v-5.3M591.5 860.2v5.3M591.5 1167.7v-5.3M84 923h11M609.3 923h-11M84 999.3h11M609.3 999.3h-11M84 1075h11M609.3 1075h-11M84 1149.8h11M609.3 1149.8h-11M84 886h6M609.3 886h-6M84 961.15h6M609.3 961.15h-6M84 1037.15h6M609.3 1037.15h-6M84 1112.4h6M609.3 1112.4h-6" stroke="#c9c9c9" stroke-width="1.3" fill="none"/><rect x="84" y="860.2" width="525.3" height="307.5" fill="none" stroke="#c9c9c9" stroke-width="1.5"/><text x="75.4" y="929.2" font-size="18.5" text-anchor="end" font-weight="bold" fill="#b9b9b9">60.06</text><text x="75.4" y="1005.5" font-size="18.5" text-anchor="end" font-weight="bold" fill="#b9b9b9">60.05</text><text x="75.4" y="1081.2" font-size="18.5" text-anchor="end" font-weight="bold" fill="#b9b9b9">60.04</text><text x="75.4" y="1156" font-size="18.5" text-anchor="end" font-weight="bold" fill="#b9b9b9">60.03</text><rect x="84" y="1225" width="525.3" height="282" fill="#111"/><path d="M146.9 1225V1507M213.59 1225V1507M280.28 1225V1507M346.97 1225V1507M413.66 1225V1507M480.35 1225V1507M547.04 1225V1507M84 1241.5H609.3M84 1304.6H609.3M84 1366.8H609.3M84 1429.8H609.3M84 1491.8H609.3" stroke="#555555" stroke-width="1.1" fill="none"/><path clip-path="url(#cp3)" d="M83.3 1477.8C88.58 1474.42 104.42 1464.33 115 1457.5C125.58 1450.67 137.97 1442.63 146.8 1436.8C155.63 1430.97 160.72 1427.35 168 1422.5C175.28 1417.65 182.78 1412.25 190.5 1407.7C198.22 1403.15 204.88 1400.07 214.3 1395.2C223.72 1390.33 235.98 1384.13 247 1378.5C258.02 1372.87 270.4 1366.57 280.4 1361.4C290.4 1356.23 298.18 1352 307 1347.5C315.82 1343 326.7 1337.48 333.3 1334.4C339.9 1331.32 338.82 1332.03 346.6 1329C354.38 1325.97 368.98 1320.37 380 1316.2C391.02 1312.03 402.7 1307.7 412.7 1304C422.7 1300.3 430.73 1297.45 440 1294C449.27 1290.55 461.38 1285.6 468.3 1283.3C475.22 1281 473.72 1282.08 481.5 1280.2C489.28 1278.32 503.98 1274.65 515 1272C526.02 1269.35 536.77 1266.63 547.6 1264.3C558.43 1261.97 569.68 1260.02 580 1258C590.32 1255.98 604.58 1253.17 609.5 1252.2" fill="none" stroke="#d2c35a" stroke-width="2.2" stroke-linejoin="round"/><path d="M102.44 1225v5.3M102.44 1507v-5.3M124.67 1225v5.3M124.67 1507v-5.3M146.9 1225v10.6M146.9 1507v-10.6M169.13 1225v5.3M169.13 1507v-5.3M191.36 1225v5.3M191.36 1507v-5.3M213.59 1225v10.6M213.59 1507v-10.6M235.82 1225v5.3M235.82 1507v-5.3M258.05 1225v5.3M258.05 1507v-5.3M280.28 1225v10.6M280.28 1507v-10.6M302.51 1225v5.3M302.51 1507v-5.3M324.74 1225v5.3M324.74 1507v-5.3M346.97 1225v10.6M346.97 1507v-10.6M369.2 1225v5.3M369.2 1507v-5.3M391.43 1225v5.3M391.43 1507v-5.3M413.66 1225v10.6M413.66 1507v-10.6M435.89 1225v5.3M435.89 1507v-5.3M458.12 1225v5.3M458.12 1507v-5.3M480.35 1225v10.6M480.35 1507v-10.6M502.58 1225v5.3M502.58 1507v-5.3M524.81 1225v5.3M524.81 1507v-5.3M547.04 1225v10.6M547.04 1507v-10.6M569.27 1225v5.3M569.27 1507v-5.3M591.5 1225v5.3M591.5 1507v-5.3M84 1241.5h11M609.3 1241.5h-11M84 1304.6h11M609.3 1304.6h-11M84 1366.8h11M609.3 1366.8h-11M84 1429.8h11M609.3 1429.8h-11M84 1491.8h11M609.3 1491.8h-11M84 1273.05h6M609.3 1273.05h-6M84 1335.7h6M609.3 1335.7h-6M84 1398.3h6M609.3 1398.3h-6M84 1460.8h6M609.3 1460.8h-6" stroke="#c9c9c9" stroke-width="1.3" fill="none"/><rect x="84" y="1225" width="525.3" height="282" fill="none" stroke="#c9c9c9" stroke-width="1.5"/><text x="75.4" y="1247.7" font-size="18.5" text-anchor="end" font-weight="bold" fill="#b9b9b9">1.0122</text><text x="75.4" y="1310.8" font-size="18.5" text-anchor="end" font-weight="bold" fill="#b9b9b9">1.0120</text><text x="75.4" y="1373" font-size="18.5" text-anchor="end" font-weight="bold" fill="#b9b9b9">1.0118</text><text x="75.4" y="1436" font-size="18.5" text-anchor="end" font-weight="bold" fill="#b9b9b9">1.0116</text><text x="75.4" y="1498" font-size="18.5" text-anchor="end" font-weight="bold" fill="#b9b9b9">1.0114</text><text x="147.5" y="1529.8" font-size="18.5" text-anchor="middle" font-weight="bold" fill="#b9b9b9">1.17</text><text x="214.19" y="1529.8" font-size="18.5" text-anchor="middle" font-weight="bold" fill="#b9b9b9">1.2</text><text x="280.88" y="1529.8" font-size="18.5" text-anchor="middle" font-weight="bold" fill="#b9b9b9">1.23</text><text x="347.57" y="1529.8" font-size="18.5" text-anchor="middle" font-weight="bold" fill="#b9b9b9">1.26</text><text x="414.26" y="1529.8" font-size="18.5" text-anchor="middle" font-weight="bold" fill="#b9b9b9">1.29</text><text x="480.95" y="1529.8" font-size="18.5" text-anchor="middle" font-weight="bold" fill="#b9b9b9">1.32</text><text x="547.64" y="1529.8" font-size="18.5" text-anchor="middle" font-weight="bold" fill="#b9b9b9">1.35</text></svg>
<svg class="abs" style="left:702px;top:159px" width="1843" height="1397" viewBox="702 159 1843 1397" font-family="'Liberation Sans',sans-serif">
<defs><filter id="sh" x="-10%" y="-10%" width="130%" height="130%"><feDropShadow dx="2.2" dy="2.2" stdDeviation="1.6" flood-color="#000" flood-opacity=".42"/></filter><linearGradient id="fade" x1="0" y1="0" x2="0" y2="1"><stop offset="0" stop-color="#fff" stop-opacity="0"/><stop offset=".35" stop-color="#fff" stop-opacity=".95"/><stop offset=".65" stop-color="#fff" stop-opacity=".95"/><stop offset="1" stop-color="#fff" stop-opacity="0"/></linearGradient><linearGradient id="gw" x1="0" y1="0" x2="0" y2="1"><stop offset="0" stop-color="#ffffff"/><stop offset="0.38" stop-color="#ffffff"/><stop offset="0.38" stop-color="#f5f5f9"/><stop offset="0.5" stop-color="#f5f5f9"/><stop offset="0.5" stop-color="#eeeef2"/><stop offset="0.62" stop-color="#eeeef2"/><stop offset="0.62" stop-color="#e8e8ea"/><stop offset="0.75" stop-color="#e8e8ea"/><stop offset="0.75" stop-color="#e0e0e0"/><stop offset="0.88" stop-color="#e0e0e0"/><stop offset="0.88" stop-color="#d6d6d6"/><stop offset="1" stop-color="#d6d6d6"/></linearGradient><linearGradient id="gc" x1="0" y1="0" x2="0" y2="1"><stop offset="0" stop-color="#86e9e9"/><stop offset="0.3" stop-color="#86e9e9"/><stop offset="0.3" stop-color="#7ce4e4"/><stop offset="0.4" stop-color="#7ce4e4"/><stop offset="0.4" stop-color="#6bdcdd"/><stop offset="0.52" stop-color="#6bdcdd"/><stop offset="0.52" stop-color="#53d4d6"/><stop offset="0.65" stop-color="#53d4d6"/><stop offset="0.65" stop-color="#31c6c8"/><stop offset="0.82" stop-color="#31c6c8"/><stop offset="0.82" stop-color="#1bbcc0"/><stop offset="0.92" stop-color="#1bbcc0"/><stop offset="0.92" stop-color="#06b4b8"/><stop offset="1" stop-color="#06b4b8"/></linearGradient></defs>
<g><path d="M1110 196L1163.8 196L1163.8 464.2L1096 464.2" fill="none" stroke="#6c6c6c" stroke-width="3.6"/><path d="M1110 196L1163.8 196L1163.8 464.2L1096 464.2" fill="none" stroke="#c4c4c4" stroke-width="0.9"/><path d="M1960.5 464.5L1898.5 464.5L1898.5 195.5L1948 195.5" fill="none" stroke="#6a6a6a" stroke-width="1.35"/><rect x="1159" y="220" width="9.6" height="22" fill="url(#fade)"/><rect x="1896" y="223" width="5" height="16" fill="url(#fade)"/><rect x="1159" y="256" width="9.6" height="22" fill="url(#fade)"/><rect x="1896" y="259" width="5" height="16" fill="url(#fade)"/><rect x="1159" y="292" width="9.6" height="22" fill="url(#fade)"/><rect x="1896" y="295" width="5" height="16" fill="url(#fade)"/><path d="M1342.9 231L1342.9 795.4" fill="none" stroke="#5b67b6" stroke-width="1.5"/><path d="M1369.6 267L1369.6 795.4" fill="none" stroke="#5b67b6" stroke-width="1.5"/><path d="M1396.2 303L1396.2 795.4" fill="none" stroke="#5b67b6" stroke-width="1.5"/><path d="M1647.4 231L1647.4 356.3" fill="none" stroke="#5b67b6" stroke-width="1.5"/><path d="M1674.3 267L1674.3 356.3" fill="none" stroke="#5b67b6" stroke-width="1.5"/><path d="M1700.8 303L1700.8 356.3" fill="none" stroke="#5b67b6" stroke-width="1.5"/><path d="M1567 461.7L1567 795.4" fill="none" stroke="#5b67b6" stroke-width="1.5"/><path d="M1593.8 489.2L1593.8 795.4" fill="none" stroke="#5b67b6" stroke-width="1.5"/><path d="M1620.5 516.2L1620.5 795.4" fill="none" stroke="#5b67b6" stroke-width="1.5"/><rect x="1340.9" y="259" width="4" height="16" fill="url(#fade)"/><rect x="1340.9" y="295" width="4" height="16" fill="url(#fade)"/><rect x="1367.6" y="295" width="4" height="16" fill="url(#fade)"/><rect x="1645.4" y="259" width="4" height="16" fill="url(#fade)"/><rect x="1645.4" y="295" width="4" height="16" fill="url(#fade)"/><rect x="1672.3" y="295" width="4" height="16" fill="url(#fade)"/><rect x="1367.6" y="446.7" width="4" height="16" fill="url(#fade)"/><rect x="1394.2" y="446.7" width="4" height="16" fill="url(#fade)"/><rect x="1394.2" y="474.2" width="4" height="16" fill="url(#fade)"/><rect x="1340.9" y="698" width="4" height="16" fill="url(#fade)"/><rect x="1340.9" y="724.9" width="4" height="16" fill="url(#fade)"/><rect x="1367.6" y="724.9" width="4" height="16" fill="url(#fade)"/><rect x="1565" y="474.2" width="4" height="16" fill="url(#fade)"/><rect x="1565" y="501.2" width="4" height="16" fill="url(#fade)"/><rect x="1591.8" y="501.2" width="4" height="16" fill="url(#fade)"/><text x="1250.1" y="235" font-size="11" text-anchor="middle" fill="#444">a</text><text x="1265.3" y="235" font-size="11" text-anchor="middle" fill="#444">A</text><text x="1250.1" y="271" font-size="11" text-anchor="middle" fill="#444">b</text><text x="1265.3" y="271" font-size="11" text-anchor="middle" fill="#444">B</text><text x="1250.1" y="307" font-size="11" text-anchor="middle" fill="#444">c</text><text x="1265.3" y="307" font-size="11" text-anchor="middle" fill="#444">C</text><text x="1850.3" y="235" font-size="11" text-anchor="middle" fill="#444">a</text><text x="1865.5" y="235" font-size="11" text-anchor="middle" fill="#444">A</text><text x="1850.3" y="271" font-size="11" text-anchor="middle" fill="#444">b</text><text x="1865.5" y="271" font-size="11" text-anchor="middle" fill="#444">B</text><text x="1850.3" y="307" font-size="11" text-anchor="middle" fill="#444">c</text><text x="1865.5" y="307" font-size="11" text-anchor="middle" fill="#444">C</text><text x="1456.1" y="458.7" font-size="11" text-anchor="middle" fill="#444">a</text><text x="1471.3" y="458.7" font-size="11" text-anchor="middle" fill="#444">A</text><text x="1456.1" y="486.2" font-size="11" text-anchor="middle" fill="#444">b</text><text x="1471.3" y="486.2" font-size="11" text-anchor="middle" fill="#444">B</text><text x="1456.1" y="513.2" font-size="11" text-anchor="middle" fill="#444">c</text><text x="1471.3" y="513.2" font-size="11" text-anchor="middle" fill="#444">C</text><path d="M1110 231L1960.5 231" fill="none" stroke="#5b67b6" stroke-width="1.5"/><path d="M1110 267L1960.5 267" fill="none" stroke="#5b67b6" stroke-width="1.5"/><path d="M1110 303L1960.5 303" fill="none" stroke="#5b67b6" stroke-width="1.5"/><path d="M1342.9 454.7H1560Q1567 454.7 1567 461.9" fill="none" stroke="#5b67b6" stroke-width="1.5"/><path d="M1369.6 482.2H1586.8Q1593.8 482.2 1593.8 489.4" fill="none" stroke="#5b67b6" stroke-width="1.5"/><path d="M1396.2 509.2H1613.5Q1620.5 509.2 1620.5 516.4" fill="none" stroke="#5b67b6" stroke-width="1.5"/><path d="M1262.2 679.3L1342.9 679.3" fill="none" stroke="#5b67b6" stroke-width="1.5"/><path d="M1262.2 706L1369.6 706" fill="none" stroke="#5b67b6" stroke-width="1.5"/><path d="M1262.2 732.9L1396.2 732.9" fill="none" stroke="#5b67b6" stroke-width="1.5"/><path d="M1172 679.3L1044.4 679.3Q1038.4 679.3 1038.4 685.3L1038.4 795.4" fill="none" stroke="#5b67b6" stroke-width="1.5"/><path d="M1172 706L1070.9 706Q1064.9 706 1064.9 712L1064.9 795.4" fill="none" stroke="#5b67b6" stroke-width="1.5"/><path d="M1172 732.9L1097.7 732.9Q1091.7 732.9 1091.7 738.9L1091.7 795.4" fill="none" stroke="#5b67b6" stroke-width="1.5"/><path d="M939.7 222.5L962 222.5" fill="none" stroke="#6a6a6a" stroke-width="1.35"/><path d="M993 464.5L876.5 464.5L876.5 285.5L962 285.5" fill="none" stroke="#6a6a6a" stroke-width="1.35"/><path d="M2086.4 249.3L2136 249.3" fill="none" stroke="#6c6c6c" stroke-width="3.6"/><path d="M2086.4 249.3L2136 249.3" fill="none" stroke="#c4c4c4" stroke-width="0.9"/><path d="M2159 249.5L2337.5 249.5L2337.5 490.5L2099 490.5" fill="none" stroke="#6a6a6a" stroke-width="1.35"/><path d="M2148.6 437.5L2099 437.5" fill="none" stroke="#6a6a6a" stroke-width="1.35"/><path d="M1978.6 723.5L1947 723.5" fill="none" stroke="#6a6a6a" stroke-width="1.35"/><path d="M1897.9 723.5L1866 723.5" fill="none" stroke="#6a6a6a" stroke-width="1.35"/><path d="M1727.7 723.5L1705 723.5" fill="none" stroke="#6a6a6a" stroke-width="1.35"/><path d="M1545 723.5L1656 723.5" fill="none" stroke="#fff" stroke-width="5"/><path d="M1656 723.5L1539.5 723.5L1539.5 783" fill="none" stroke="#6a6a6a" stroke-width="1.35"/><path d="M1028.8 1046.5L1276 1046.5" fill="none" stroke="#6a6a6a" stroke-width="1.35"/><path d="M1028.8 1082.5L1276 1082.5" fill="none" stroke="#6a6a6a" stroke-width="1.35"/><path d="M1028.8 1118.5L1276 1118.5" fill="none" stroke="#6a6a6a" stroke-width="1.35"/><path d="M1028.8 1154.5L1276 1154.5" fill="none" stroke="#6a6a6a" stroke-width="1.35"/><path d="M1934.5 1019.5L2216 1019.5" fill="none" stroke="#6a6a6a" stroke-width="1.35"/><path d="M1934.5 1046.5L2216 1046.5" fill="none" stroke="#6a6a6a" stroke-width="1.35"/><path d="M1934.5 1073.5L2216 1073.5" fill="none" stroke="#6a6a6a" stroke-width="1.35"/><path d="M1934.5 1100.5L2216 1100.5" fill="none" stroke="#6a6a6a" stroke-width="1.35"/></g>
<circle cx="1342.9" cy="231" r="4.6" fill="#0c1a80"/><circle cx="1369.6" cy="267" r="4.6" fill="#0c1a80"/><circle cx="1396.2" cy="303" r="4.6" fill="#0c1a80"/><circle cx="1647.4" cy="231" r="4.6" fill="#0c1a80"/><circle cx="1674.3" cy="267" r="4.6" fill="#0c1a80"/><circle cx="1700.8" cy="303" r="4.6" fill="#0c1a80"/><circle cx="1342.9" cy="454.7" r="4.6" fill="#0c1a80"/><circle cx="1369.6" cy="482.2" r="4.6" fill="#0c1a80"/><circle cx="1396.2" cy="509.2" r="4.6" fill="#0c1a80"/><circle cx="1342.9" cy="679.3" r="4.6" fill="#0c1a80"/><circle cx="1369.6" cy="706" r="4.6" fill="#0c1a80"/><circle cx="1396.2" cy="732.9" r="4.6" fill="#0c1a80"/><path d="M975.2 222.3L961.2 215.1L961.2 229.5Z" fill="#000"/><path d="M975.2 285.3L961.2 278.1L961.2 292.5Z" fill="#000"/><path d="M1083.5 464.2L1097.5 457L1097.5 471.4Z" fill="#000"/><path d="M1960.5 195.3L1946.5 188.1L1946.5 202.5Z" fill="#000"/><path d="M2148.6 249.3L2134.6 242.1L2134.6 256.5Z" fill="#000"/><path d="M2086.8 490.6L2100.8 483.4L2100.8 497.8Z" fill="#000"/><path d="M2086.8 437.4L2100.8 430.2L2100.8 444.6Z" fill="#000"/><path d="M1934.6 723.5L1948.6 716.3L1948.6 730.7Z" fill="#000"/><path d="M1854 723.5L1868 716.3L1868 730.7Z" fill="#000"/><path d="M1693 723.5L1707 716.3L1707 730.7Z" fill="#000"/><path d="M1539.6 795.4L1532.4 781.4L1546.8 781.4Z" fill="#000"/><path d="M1288.6 1046.3L1274.6 1039.1L1274.6 1053.5Z" fill="#000"/><path d="M1288.6 1082.3L1274.6 1075.1L1274.6 1089.5Z" fill="#000"/><path d="M1288.6 1118.3L1274.6 1111.1L1274.6 1125.5Z" fill="#000"/><path d="M1288.6 1154.3L1274.6 1147.1L1274.6 1161.5Z" fill="#000"/>
<g filter="url(#sh)"><rect x="903.2" y="203.6" width="36.5" height="36.3" fill="#fff" stroke="#111" stroke-width="1.3"/><rect x="975.2" y="182.5" width="134.8" height="132.3" fill="#fff" stroke="#111" stroke-width="1.3"/><rect x="993" y="435" width="90" height="57.5" fill="url(#gw)" stroke="#111" stroke-width="1.3"/><rect x="1252.4" y="209" width="10.6" height="115.5" fill="#000" stroke="#000" stroke-width="0"/><rect x="1852.8" y="209" width="10.2" height="115.3" fill="#000" stroke="#000" stroke-width="0"/><rect x="1458.7" y="439.9" width="10.1" height="83.9" fill="#000" stroke="#000" stroke-width="0"/><rect x="1327.4" y="579.6" width="83.9" height="10.1" fill="#000" stroke="#000" stroke-width="0"/><rect x="2148.6" y="214.5" width="10.4" height="68.5" fill="#000" stroke="#000" stroke-width="0"/><rect x="1632.5" y="356.3" width="82.8" height="98.4" fill="#fff" stroke="#111" stroke-width="1.3"/><rect x="1960.5" y="182.6" width="125.9" height="132.4" fill="#00cdd0" stroke="#111" stroke-width="1.3"/><rect x="1960.5" y="410.3" width="125.9" height="107.1" fill="url(#gc)" stroke="#111" stroke-width="1.3"/><rect x="2148.6" y="419.2" width="36.6" height="35.8" fill="#fff" stroke="#111" stroke-width="1.3"/><rect x="2125.3" y="580.2" width="202.7" height="68.4" fill="#00cb00" stroke="#111" stroke-width="1.3"/><rect x="1172" y="660.8" width="90.2" height="89.6" fill="#fff" stroke="#111" stroke-width="1.3"/><rect x="1023.8" y="795.4" width="82.5" height="125.3" fill="#fff" stroke="#111" stroke-width="1.3"/><rect x="1326.5" y="795.4" width="86" height="125.3" fill="#fff" stroke="#111" stroke-width="1.3"/><rect x="1521.7" y="795.4" width="116.7" height="125.3" fill="#fff" stroke="#111" stroke-width="1.3"/><rect x="1656" y="705.5" width="36.6" height="36" fill="#fff" stroke="#111" stroke-width="1.3"/><rect x="1727.7" y="687.9" width="125.9" height="71.7" fill="#00cdd0" stroke="#111" stroke-width="1.3"/><rect x="1897.9" y="705.5" width="36.3" height="36" fill="#fff" stroke="#111" stroke-width="1.3"/><path d="M1978.6 723.6L2005.4 705.5H2086.6V741.5H2005.4Z" fill="#fff" stroke="#000" stroke-width="1.4"/><path d="M921 1031.7H1002L1028.8 1046.15L1002 1060.6H921Z" fill="#fff" stroke="#000" stroke-width="1.4"/><path d="M921 1068H1002L1028.8 1082.3L1002 1096.6H921Z" fill="#fff" stroke="#000" stroke-width="1.4"/><path d="M921 1104H1002L1028.8 1118.3L1002 1132.6H921Z" fill="#fff" stroke="#000" stroke-width="1.4"/><path d="M921 1139.8H1002L1028.8 1154.05L1002 1168.3H921Z" fill="#fff" stroke="#000" stroke-width="1.4"/><rect x="1288.6" y="1030.2" width="72.1" height="139.8" fill="#00cb00" stroke="#111" stroke-width="1.3"/><rect x="1298.2" y="1048.7" width="52.8" height="61.3" rx="7" fill="none" stroke="#000" stroke-width="1.7"/><rect x="993" y="1243.3" width="140.6" height="88.1" fill="#fff" stroke="#111" stroke-width="1.3"/><rect x="2125.5" y="1272" width="54.3" height="52.4" fill="#fff" stroke="#111" stroke-width="1.3"/><rect x="1861.9" y="1001.2" width="72.6" height="116.5" fill="url(#gw)" stroke="#111" stroke-width="1.3"/><rect x="2227.1" y="995.8" width="76.8" height="127.9" fill="none" stroke="#74b9f3" stroke-width="2.8"/><rect x="2229" y="997.7" width="73" height="124.1" fill="#00cb00" stroke="#111" stroke-width="1.3"/><rect x="2239" y="1014" width="53" height="54.4" rx="7" fill="none" stroke="#000" stroke-width="1.7"/></g>
<path d="M2229.4 1019.4L2215.4 1012.2L2215.4 1026.6Z" fill="#000"/><path d="M2229.4 1046.6L2215.4 1039.4L2215.4 1053.8Z" fill="#000"/><path d="M2229.4 1073.5L2215.4 1066.3L2215.4 1080.7Z" fill="#000"/><path d="M2229.4 1100.3L2215.4 1093.1L2215.4 1107.5Z" fill="#000"/>
<path d="M1342.9 578.5L1342.9 591" fill="none" stroke="#39428f" stroke-width="1.3"/><path d="M1369.6 578.5L1369.6 591" fill="none" stroke="#39428f" stroke-width="1.3"/><path d="M1396.2 578.5L1396.2 591" fill="none" stroke="#39428f" stroke-width="1.3"/>
<ellipse cx="1042" cy="267.3" rx="39.2" ry="46.6" fill="none" stroke="#333" stroke-width="1"/><path d="M1015.66 244.13L1024.13 244.13L1024.13 290.95L1015.66 290.95L1020.95 298.89L1028.89 304.18L1042.12 306.3L1055.34 304.18L1063.28 298.89L1069.1 290.95L1060.63 290.95L1060.63 244.13L1069.1 244.13L1063.28 236.72L1055.34 230.9L1042.12 228.52L1028.89 230.9L1020.95 236.72Z" fill="none" stroke="#333" stroke-width="1"/><path d="M1068.57 231.43L1092.91 231.43" fill="none" stroke="#333" stroke-width="1"/><path d="M1081.27 267.67L1092.91 267.67" fill="none" stroke="#333" stroke-width="1"/><path d="M1068.57 302.33L1092.91 302.33" fill="none" stroke="#333" stroke-width="1"/><path d="M1087.88 199.68L1042.12 199.68L1042.12 223.49" fill="none" stroke="#0000e6" stroke-width="1.4"/><path d="M1004.55 223.49L1016.19 235.66" fill="none" stroke="#0000e6" stroke-width="1.4"/><ellipse cx="2023.6" cy="264.2" rx="40.2" ry="43.2" fill="none" stroke="#0a4f55" stroke-width="1"/><ellipse cx="2023.6" cy="264.2" rx="30.2" ry="32.4" fill="none" stroke="#0a4f55" stroke-width="1"/><path d="M1976.9 226.07L2003.1 226.07" fill="none" stroke="#0a4f55" stroke-width="1"/><path d="M1976.01 265.65L1983.45 265.65" fill="none" stroke="#0a4f55" stroke-width="1"/><path d="M1976.9 301.37L2003.1 301.37" fill="none" stroke="#0a4f55" stroke-width="1"/><path d="M1989.7 205.24L2012.02 205.24L2012.02 221.61" fill="none" stroke="#0000e6" stroke-width="1.6"/><rect x="2149.6" y="241.5" width="8.4" height="15.6" fill="#fff" stroke="#999" stroke-width=".8"/><path d="M2149.6 246.7h8.4M2149.6 251.9h8.4" stroke="#999" stroke-width=".8"/><path d="M1674.3 379V404M1664.3 404H1684M1664.3 419.5Q1674.3 415.5 1684 419.5M1674.3 417.6V441.7" fill="none" stroke="#333" stroke-width="1.1"/><circle cx="1674.3" cy="379" r="1.3" fill="#222"/><path d="M1195 683.8L1239.6 706" stroke="#333" stroke-width="1.1"/><rect x="1186.6" y="701.6" width="8.9" height="8.9" fill="#fff" stroke="#333" stroke-width="1"/><rect x="1239.6" y="701.6" width="8" height="8.9" fill="#fff" stroke="#333" stroke-width="1"/><path d="M1191 710.5V723.6H1209.2M1225.6 723.6H1243.6V710.5" fill="none" stroke="#333" stroke-width="1"/><rect x="1209.2" y="719.2" width="16.4" height="9" fill="#fff" stroke="#333" stroke-width="1"/><path d="M1065.3 823V837.6L1055.9 843.6L1074.7 851.6L1055.9 860L1074.7 867.6L1055.9 875L1074.7 882.6L1065.3 887V903M1055.3 903H1075.3M1059.3 909H1071.3M1062.3 914.2H1068.3" fill="none" stroke="#333" stroke-width="1.1"/><circle cx="1065.3" cy="822.6" r="1.3" fill="#222"/><path d="M1369.8 823V837.6L1360.4 843.6L1379.2 851.6L1360.4 860L1379.2 867.6L1360.4 875L1379.2 882.6L1369.8 887V903M1359.8 903H1379.8M1363.8 909H1375.8M1366.8 914.2H1372.8" fill="none" stroke="#333" stroke-width="1.1"/><circle cx="1369.8" cy="822.6" r="1.3" fill="#222"/><path d="M1533.8 895.7h6.4v10h6.6L1537 918 1526.8 905.7h7Z" fill="#d2d2d2" stroke="#b4b4b4" stroke-width="1"/><path d="M1740 735h6.4v9.6h7L1743.3 756.8 1733 744.6h7Z" fill="#2a9bbb" stroke="#24879f" stroke-width="1"/><text x="1673.6" y="718.8" text-anchor="middle" font-size="21" style="font-family:'Liberation Serif',serif">1</text><path d="M1668.6 723.8h9.6" stroke="#000" stroke-width="1.1"/><text x="1673.6" y="740.4" text-anchor="middle" font-size="23" font-style="italic" style="font-family:'Liberation Serif',serif">z</text><path d="M1903.3 732.9H1909.6V715.4H1916.8V722.6H1923.6V728.4H1930.6" fill="none" stroke="#000" stroke-width="1.6"/><rect x="999.3" y="1306.7" width="30.7" height="16.3" fill="#f4c356"/><path d="M1018.5 1310.2h-7.6v4.4h7.2v4.6h-8.2" fill="none" stroke="#fff" stroke-width="3"/>
<text x="921.5" y="227.5" font-size="17.9" text-anchor="middle">0</text><text x="921.3" y="263.5" font-size="17.9" text-anchor="middle">0 kW</text><text x="980.8" y="228.2" font-size="17.5" fill="#0000e6">Pm</text><text x="981.2" y="291" font-size="17.5">Vf</text><text x="1104.2" y="200.8" font-size="16.6" text-anchor="end">m</text><text x="1104.2" y="237.4" font-size="16.6" text-anchor="end">A</text><text x="1104.2" y="273.6" font-size="16.6" text-anchor="end">B</text><text x="1104.2" y="309.2" font-size="16.6" text-anchor="end">C</text><text x="1042" y="339.3" font-size="17.9" text-anchor="middle">Synchronous Condenser</text><text x="1044" y="362.4" font-size="17.9" text-anchor="middle">480V 300kVA</text><text x="1037.6" y="425" font-size="17.9" text-anchor="middle">Excitation</text><text x="998.7" y="470.2" font-size="17.5">Vf</text><text x="1077.5" y="469.4" font-size="17.5" text-anchor="end">m</text><text x="1257.3" y="347.6" font-size="17.9" text-anchor="middle">SC</text><text x="1858" y="347.6" font-size="17.9" text-anchor="middle">WT</text><text x="1463.6" y="546.6" font-size="17.9" text-anchor="middle">SL</text><text x="1317.2" y="591.6" font-size="17.9" text-anchor="end">Load</text><text x="1653.16" y="361.8" font-size="16.1" text-anchor="end" transform="rotate(-90 1653.16 361.8)">A</text><text x="1680.06" y="361.8" font-size="16.1" text-anchor="end" transform="rotate(-90 1680.06 361.8)">B</text><text x="1706.56" y="361.8" font-size="16.1" text-anchor="end" transform="rotate(-90 1706.56 361.8)">C</text><text x="1726.5" y="389.2" font-size="17.9">PF Correction</text><text x="1726.5" y="412.4" font-size="17.9">Capacitor</text><text x="1726.5" y="435.7" font-size="17.9">75 kvar</text><text x="1966.3" y="201.2" font-size="16.1" fill="#0000e6">Tm</text><text x="1965.8" y="237.6" font-size="16.1">A</text><text x="1965.8" y="273.6" font-size="16.1">B</text><text x="1965.8" y="309.2" font-size="16.1">C</text><text x="2080.6" y="254.2" font-size="16.1" text-anchor="end">m</text><text x="2023.3" y="339.3" font-size="17.9" text-anchor="middle">Asynchronous Generator</text><text x="2023.3" y="362.4" font-size="17.9" text-anchor="middle">480V 275kVA</text><text x="2252.3" y="241" font-size="16" text-anchor="middle">&lt;Rotor speed (wm)&gt;</text><text x="2166.8" y="409" font-size="17.9" text-anchor="middle">Wind speed (m/s)</text><text x="2167" y="441.8" font-size="17.9" text-anchor="middle">10</text><text x="2080.6" y="443.2" font-size="16.1" text-anchor="end">w_Wind</text><text x="1966.3" y="470" font-size="16.1">Tm</text><text x="2080.6" y="496.8" font-size="16.1" text-anchor="end">w_Turb</text><text x="2023.3" y="541.6" font-size="17.9" text-anchor="middle">Wind Turbine</text><text x="2226.6" y="609.6" font-size="17.9" text-anchor="middle">Double click to display</text><text x="2226.6" y="631.8" font-size="17.9" text-anchor="middle">Turbine characteristics</text><text x="1177.8" y="686" font-size="16.6">a</text><text x="1257" y="686" font-size="16.6" text-anchor="end">A</text><text x="1177.8" y="712.8" font-size="16.6">b</text><text x="1257" y="712.8" font-size="16.6" text-anchor="end">B</text><text x="1177.8" y="739.6" font-size="16.6">c</text><text x="1257" y="739.6" font-size="16.6" text-anchor="end">C</text><text x="1217.3" y="773.9" font-size="17.9" text-anchor="middle">3-Phase Breaker</text><text x="1044.34" y="800.8" font-size="16.6" text-anchor="end" transform="rotate(-90 1044.34 800.8)">A</text><text x="1070.84" y="800.8" font-size="16.6" text-anchor="end" transform="rotate(-90 1070.84 800.8)">B</text><text x="1097.64" y="800.8" font-size="16.6" text-anchor="end" transform="rotate(-90 1097.64 800.8)">C</text><text x="1348.84" y="800.8" font-size="16.6" text-anchor="end" transform="rotate(-90 1348.84 800.8)">A</text><text x="1375.54" y="800.8" font-size="16.6" text-anchor="end" transform="rotate(-90 1375.54 800.8)">B</text><text x="1402.14" y="800.8" font-size="16.6" text-anchor="end" transform="rotate(-90 1402.14 800.8)">C</text><text x="1545.33" y="800.6" font-size="16" text-anchor="end" transform="rotate(-90 1545.33 800.6)">Control</text><text x="1572.73" y="800.6" font-size="16" text-anchor="end" transform="rotate(-90 1572.73 800.6)">A</text><text x="1599.53" y="800.6" font-size="16" text-anchor="end" transform="rotate(-90 1599.53 800.6)">B</text><text x="1626.23" y="800.6" font-size="16" text-anchor="end" transform="rotate(-90 1626.23 800.6)">C</text><text x="1117" y="853" font-size="17.9">Load</text><text x="1117" y="876.3" font-size="17.9">25 kW</text><text x="1315.5" y="853" font-size="17.9" text-anchor="end">Main Load</text><text x="1315.5" y="876.3" font-size="17.9" text-anchor="end">50 kW</text><text x="1205.4" y="932.4" font-size="17.9" text-anchor="middle">Consumer Load</text><text x="1649.4" y="842" font-size="17.9">Secondary</text><text x="1649.4" y="865.3" font-size="17.9">Load</text><text x="1649.4" y="888.5" font-size="17.9">(0-446.25 kW)</text><text x="1733.3" y="730" font-size="16.2">Control</text><text x="1848.2" y="730" font-size="16.2" text-anchor="end">Vabc</text><text x="1790.5" y="782.9" font-size="17.9" text-anchor="middle">Discrete</text><text x="1790.5" y="806.1" font-size="17.9" text-anchor="middle">Frequency Regulator</text><text x="2045.6" y="730" font-size="17.9" text-anchor="middle" textLength="73.5" lengthAdjust="spacingAndGlyphs">Vabc_SL</text><text x="962" y="1052.4" font-size="17.9" text-anchor="middle" textLength="76.8" lengthAdjust="spacingAndGlyphs">Vabc_SC</text><text x="962" y="1088.4" font-size="17.9" text-anchor="middle" textLength="67.5" lengthAdjust="spacingAndGlyphs">Iabc_SL</text><text x="962" y="1124.4" font-size="17.9" text-anchor="middle">Freq</text><text x="962" y="1160.2" font-size="17.9" text-anchor="middle" textLength="62.4" lengthAdjust="spacingAndGlyphs">w_ASM</text><text x="1260.4" y="1067" font-size="16.2" text-anchor="end">Vabc (pu)</text><text x="1252.8" y="1102.8" font-size="16.2" text-anchor="end">Iabc Sec. Load (pu/275 kVA)</text><text x="1260.4" y="1138.8" font-size="16.2" text-anchor="end">Frequency (Hz)</text><text x="1260.4" y="1174.8" font-size="16.2" text-anchor="end">ASM speed (pu)</text><text x="1324.3" y="1193.6" font-size="17.9" text-anchor="middle">Scope1</text><text x="1063" y="1292.6" font-size="19.4" text-anchor="middle" fill="#0000d2">Continuous</text><text x="1063" y="1354.8" font-size="19.4" text-anchor="middle">powergui</text><text x="1247.5" y="1300.6" font-size="25.06" font-weight="bold">Wind-Turbine Asynchronous Generator in Isolated Network</text><text x="2152.6" y="1303.4" font-size="16" text-anchor="middle">?</text><text x="1928.6" y="1025.4" font-size="16.2" text-anchor="end">P_WT</text><text x="1928.6" y="1052.6" font-size="16.2" text-anchor="end">P_SL</text><text x="1928.6" y="1079.4" font-size="16.2" text-anchor="end">P_Load</text><text x="1928.6" y="1106" font-size="16.2" text-anchor="end">Q_SC</text><text x="2201" y="1039.6" font-size="16.2" text-anchor="end" xml:space="preserve">P Wind Turb.  (kW)</text><text x="2201" y="1066.8" font-size="16.2" text-anchor="end" xml:space="preserve">P Sec. Load  (kW)</text><text x="2201" y="1094.2" font-size="16.2" text-anchor="end" xml:space="preserve">P Main Load (kW)</text><text x="2201" y="1120.6" font-size="16.2" text-anchor="end" xml:space="preserve">Q Synch.  Condenser (kvar)</text><text x="1898" y="1141.6" font-size="17.9" text-anchor="middle">Power</text><text x="1898" y="1165.2" font-size="17.9" text-anchor="middle">Computation</text><text x="2265.4" y="1145" font-size="17.9" text-anchor="middle">Scope2</text><text x="903.8" y="1399.1" font-size="21.49">This example uses an initial state vector to start the simulation from steady-state. When you make changes to the model (add, delete, rename blocks, etc),</text><text x="903.8" y="1424.22" font-size="21.49">the initial state vector needs to be regenerated or disabled, otherwise Simulink signals an error when the simulation is started.</text><text x="903.8" y="1449.34" font-size="21.49">To disable the use of initial state vector for this model, go to the Data Import/Export section of the Model Configuration Parameters tool and uncheck the</text><text x="903.8" y="1474.46" font-size="21.49"><tspan font-weight="bold" font-style="italic">Initial state</tspan> option under the 'Load from workspace' section.</text><text x="903.8" y="1499.58" font-size="21.49">To regenerate the initial state vector after a change to the model, follow the instructions given in the initialization file for this model.</text><text x="903.8" y="1524.7" font-size="21.49">Type open('init_power_windgen') at the matlab prompt to view this file.</text>
</svg>
</body></html>
